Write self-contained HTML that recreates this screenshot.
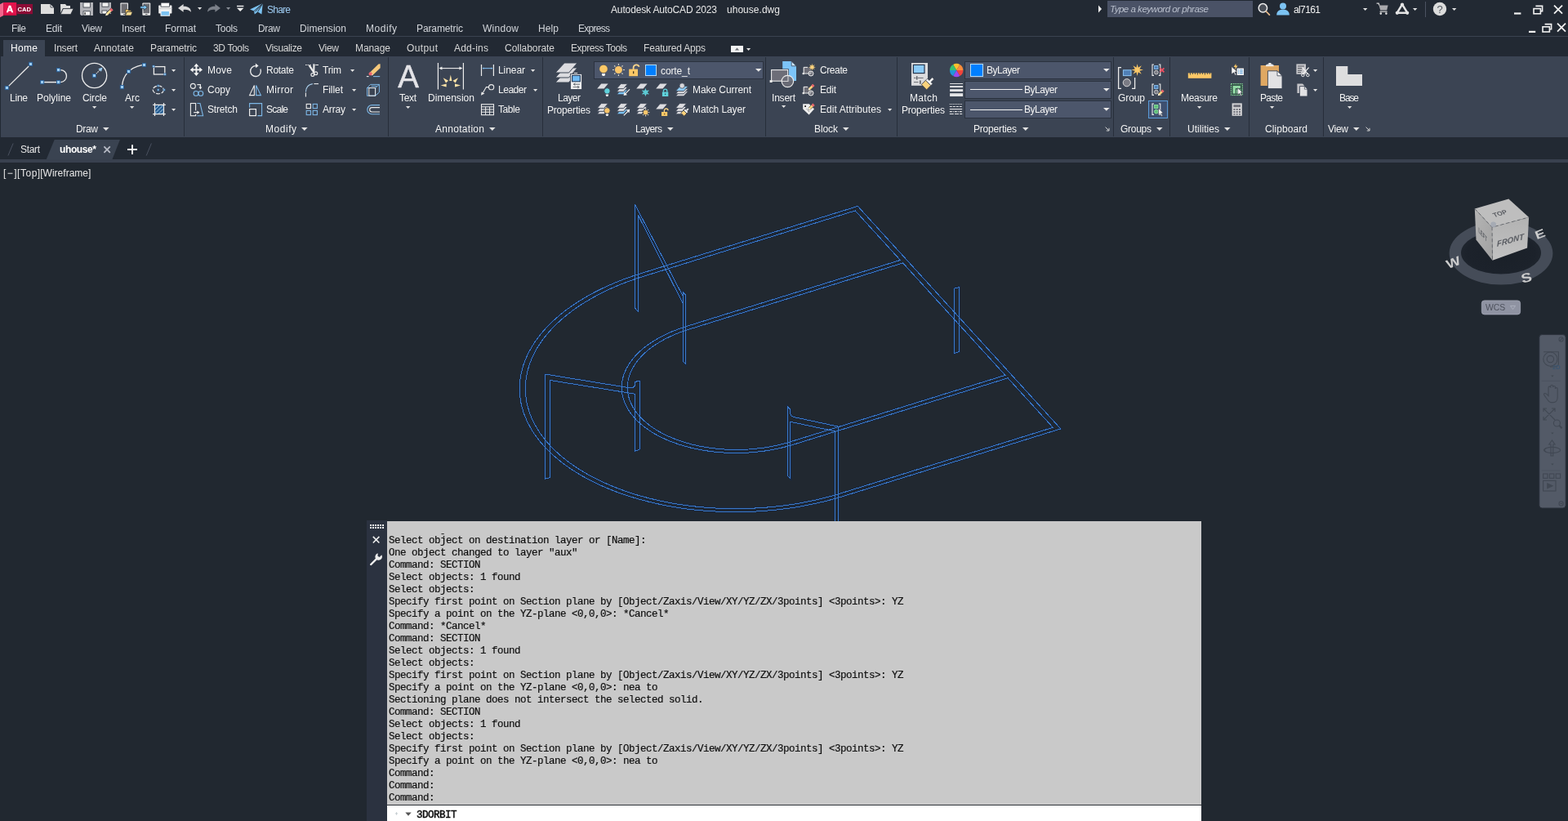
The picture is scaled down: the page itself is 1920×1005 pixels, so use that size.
<!DOCTYPE html>
<html lang="en">
<head>
<meta charset="utf-8">
<title>Autodesk AutoCAD 2023 - uhouse.dwg</title>
<style>
html,body{margin:0;padding:0;background:#212830;}
body{width:1920px;height:1005px;overflow:hidden;font-family:"Liberation Sans",sans-serif;}
#app{will-change:transform;position:relative;width:1920px;height:1005px;overflow:hidden;background:#212830;}
.b{position:absolute;}
.t{position:absolute;white-space:pre;line-height:16px;font-family:"Liberation Sans",sans-serif;}
svg{position:absolute;overflow:visible;}
.cl{height:15px;line-height:15px;white-space:pre;font-family:"Liberation Mono",monospace;font-size:12.5px;letter-spacing:-0.5px;color:#101010;-webkit-text-stroke:0.2px #101010;}
.cin{font-family:"Liberation Mono",monospace;font-size:12.5px;letter-spacing:-0.5px;color:#0a0a0a;-webkit-text-stroke:0.45px #0a0a0a;}

</style>
</head>
<body>
<div id="app">
<div class="b" style="left:0;top:0;width:1920px;height:69px;background:#222933"></div>
<div class="b" style="left:0;top:44px;width:1920px;height:1px;background:#3a4250"></div>
<div class="b" style="left:4px;top:49px;width:51px;height:20px;background:#3b4453"></div>
<div class="b" style="left:0;top:69px;width:1920px;height:99px;background:#3b4453"></div>
<div class="b" style="left:0;top:69px;width:1px;height:99px;background:#222933"></div>
<div class="b" style="left:0;top:168px;width:1920px;height:27px;background:#222933"></div>
<div class="b" style="left:0;top:195px;width:1920px;height:4px;background:#39414f"></div>
<div class="b" style="left:1356px;top:1px;width:178px;height:20px;background:#4a5266"></div>

<svg id="dwg" width="1920" height="1005" viewBox="0 0 1920 1005" style="left:0;top:0" fill="none" stroke-linejoin="miter">
<path d="M1050.3 252.4 L1298.8 524.9 L1032.6 607.4 L1024.6 609.8 L1016.5 612.0 L1008.3 614.1 L999.9 616.0 L991.5 617.8 L983.0 619.4 L974.4 620.9 L965.7 622.2 L957.0 623.3 L948.2 624.3 L939.4 625.1 L930.5 625.8 L921.6 626.2 L912.7 626.5 L903.8 626.7 L894.9 626.7 L886.0 626.5 L877.2 626.1 L868.3 625.6 L859.5 624.9 L850.8 624.1 L842.1 623.1 L833.5 621.9 L825.0 620.6 L816.6 619.1 L808.3 617.4 L800.0 615.6 L791.9 613.6 L783.9 611.5 L776.1 609.2 L768.4 606.8 L760.8 604.3 L753.4 601.6 L746.2 598.7 L739.1 595.7 L732.2 592.6 L725.5 589.4 L719.0 586.0 L712.7 582.5 L706.7 578.9 L700.8 575.2 L695.1 571.3 L689.7 567.4 L684.5 563.3 L679.6 559.2 L674.9 554.9 L670.5 550.6 L666.3 546.2 L662.3 541.7 L658.6 537.1 L655.2 532.5 L652.1 527.8 L649.3 523.0 L646.7 518.2 L644.4 513.3 L642.3 508.4 L640.6 503.4 L639.2 498.4 L638.0 493.4 L637.1 488.3 L636.6 483.3 L636.3 478.2 L636.3 473.1 L636.6 468.0 L637.2 462.9 L638.0 457.9 L639.2 452.8 L640.6 447.7 L642.4 442.7 L644.4 437.7 L646.7 432.8 L649.3 427.9 L652.2 423.0 L655.3 418.2 L658.7 413.4 L662.4 408.7 L666.3 404.1 L670.5 399.6 L675.0 395.1 L679.7 390.7 L684.6 386.4 L689.8 382.1 L695.3 378.0 L700.9 374.0 L706.8 370.1 L712.9 366.3 L719.2 362.6 L725.7 359.0 L732.4 355.5 L739.3 352.2 L746.3 349.0 L753.6 345.9 L761.0 342.9 L768.5 340.1 L776.2 337.4 L784.1 334.9 L1050.3 252.4Z M1047.2 257.9 L1102.4 318.4 L839.6 399.8 L835.5 401.2 L831.4 402.6 L827.4 404.1 L823.4 405.6 L819.6 407.3 L815.9 409.0 L812.2 410.8 L808.7 412.6 L805.2 414.5 L801.9 416.5 L798.7 418.5 L795.5 420.6 L792.5 422.7 L789.7 424.9 L786.9 427.1 L784.3 429.4 L781.8 431.7 L779.4 434.1 L777.2 436.5 L775.1 439.0 L773.2 441.5 L771.4 444.0 L769.7 446.5 L768.2 449.1 L766.8 451.7 L765.6 454.3 L764.5 457.0 L763.6 459.6 L762.8 462.3 L762.2 465.0 L761.7 467.7 L761.4 470.4 L761.3 473.1 L761.3 475.8 L761.4 478.5 L761.7 481.2 L762.2 483.8 L762.8 486.5 L763.6 489.1 L764.5 491.8 L765.6 494.4 L766.8 497.0 L768.2 499.5 L769.7 502.0 L771.3 504.5 L773.1 507.0 L775.1 509.4 L777.2 511.8 L779.4 514.2 L781.8 516.5 L784.2 518.7 L786.9 520.9 L789.6 523.0 L792.5 525.1 L795.5 527.2 L798.6 529.2 L801.8 531.1 L805.1 532.9 L808.6 534.7 L812.1 536.4 L815.8 538.1 L819.5 539.7 L823.4 541.2 L827.3 542.6 L831.3 544.0 L835.4 545.2 L839.5 546.4 L843.8 547.6 L848.1 548.6 L852.4 549.6 L856.8 550.4 L861.3 551.2 L865.8 551.9 L870.4 552.6 L875.0 553.1 L879.6 553.5 L884.3 553.9 L888.9 554.2 L893.6 554.4 L898.4 554.5 L903.1 554.5 L907.8 554.4 L912.5 554.2 L917.2 554.0 L921.9 553.6 L926.6 553.2 L931.3 552.7 L935.9 552.1 L940.5 551.4 L945.0 550.6 L949.6 549.8 L954.0 548.8 L958.4 547.8 L962.8 546.7 L967.1 545.5 L971.3 544.3 L1234.1 462.8 L1289.3 523.3 L1029.4 603.9 L1021.6 606.2 L1013.7 608.4 L1005.7 610.4 L997.6 612.3 L989.3 614.0 L981.0 615.6 L972.7 617.0 L964.2 618.3 L955.7 619.4 L947.1 620.3 L938.5 621.1 L929.9 621.7 L921.3 622.2 L912.6 622.5 L903.9 622.6 L895.3 622.6 L886.6 622.4 L878.0 622.1 L869.4 621.6 L860.8 620.9 L852.3 620.1 L843.9 619.1 L835.5 618.0 L827.2 616.7 L819.0 615.2 L810.9 613.6 L802.8 611.8 L794.9 609.9 L787.2 607.9 L779.5 605.7 L772.0 603.3 L764.7 600.8 L757.4 598.2 L750.4 595.4 L743.5 592.5 L736.8 589.5 L730.3 586.3 L724.0 583.0 L717.8 579.6 L711.9 576.1 L706.2 572.5 L700.7 568.7 L695.4 564.9 L690.4 560.9 L685.5 556.9 L681.0 552.8 L676.6 548.5 L672.6 544.2 L668.7 539.9 L665.1 535.4 L661.8 530.9 L658.8 526.3 L656.0 521.6 L653.5 516.9 L651.2 512.2 L649.3 507.4 L647.6 502.6 L646.2 497.7 L645.0 492.8 L644.2 487.9 L643.6 483.0 L643.3 478.0 L643.3 473.1 L643.6 468.1 L644.2 463.1 L645.1 458.2 L646.2 453.3 L647.6 448.4 L649.3 443.5 L651.3 438.6 L653.5 433.8 L656.0 429.0 L658.8 424.3 L661.9 419.6 L665.2 414.9 L668.8 410.4 L672.6 405.9 L676.7 401.4 L681.1 397.1 L685.6 392.8 L690.5 388.6 L695.5 384.5 L700.8 380.4 L706.3 376.5 L712.0 372.7 L718.0 369.0 L724.1 365.4 L730.4 361.9 L736.9 358.5 L743.6 355.3 L750.5 352.1 L757.6 349.1 L764.8 346.3 L772.2 343.5 L779.7 340.9 L787.3 338.5 L1047.2 257.9Z M1105.6 321.9 L1230.9 459.3 L968.1 540.7 L964.1 541.9 L960.0 543.0 L955.8 544.1 L951.6 545.1 L947.4 546.0 L943.1 546.8 L938.8 547.5 L934.4 548.2 L930.0 548.7 L925.6 549.2 L921.1 549.6 L916.6 550.0 L912.2 550.2 L907.7 550.4 L903.2 550.4 L898.7 550.4 L894.2 550.3 L889.8 550.2 L885.3 549.9 L880.9 549.5 L876.5 549.1 L872.1 548.6 L867.8 548.0 L863.5 547.3 L859.2 546.6 L855.0 545.8 L850.9 544.8 L846.8 543.9 L842.8 542.8 L838.8 541.6 L834.9 540.4 L831.1 539.1 L827.4 537.8 L823.7 536.3 L820.2 534.8 L816.7 533.3 L813.3 531.6 L810.1 529.9 L806.9 528.2 L803.8 526.3 L800.9 524.5 L798.0 522.5 L795.3 520.5 L792.7 518.5 L790.2 516.4 L787.8 514.3 L785.6 512.1 L783.5 509.9 L781.5 507.6 L779.6 505.3 L777.9 503.0 L776.3 500.6 L774.9 498.2 L773.6 495.7 L772.4 493.3 L771.4 490.8 L770.5 488.3 L769.8 485.8 L769.2 483.3 L768.8 480.7 L768.5 478.2 L768.4 475.6 L768.4 473.0 L768.5 470.5 L768.8 467.9 L769.2 465.3 L769.8 462.8 L770.6 460.2 L771.4 457.7 L772.5 455.2 L773.6 452.7 L774.9 450.2 L776.4 447.8 L777.9 445.4 L779.7 443.0 L781.5 440.6 L783.5 438.3 L785.6 436.0 L787.9 433.7 L790.2 431.5 L792.7 429.3 L795.3 427.2 L798.1 425.1 L800.9 423.1 L803.9 421.1 L807.0 419.2 L810.1 417.3 L813.4 415.5 L816.8 413.8 L820.3 412.1 L823.8 410.5 L827.5 408.9 L831.2 407.4 L835.0 406.0 L838.9 404.7 L842.9 403.4 L1105.6 321.9Z M781.5 381.7 L777.5 376.9 L777.5 250.4 L836.5 363.0 M781.5 381.7 L781.5 263.5 L836.5 372.1 M836.5 363.0 L836.5 357.4 L839.6 361.4 L839.6 445.8 L836.5 442.6 L836.5 363.0 M1168.4 353.1 L1174.7 351.5 L1174.7 430.6 L1168.4 432.5Z M673.6 584.6 L667.2 586.2 L667.2 458.3 L672.3 458.8 L771.0 474.8 L775.5 474.2 L777.4 472.0 L777.4 467.4 L783.4 466.3 L783.4 549.9 L777.4 552.3 L777.4 482.2 L673.6 465.5 L673.6 584.6 M964.4 582.7 L964.4 498.0 L967.9 501.5 L967.9 506.5 L969.2 509.0 L972.5 510.6 L1026.5 522.2 L1026.5 640.0 M964.4 582.7 L967.9 585.9 L967.9 516.3 L1022.0 527.8 L1022.0 640.0" stroke="#06296e" stroke-opacity="0.33" stroke-width="2.6"/>
<path d="M1050.3 252.4 L1298.8 524.9 L1032.6 607.4 L1024.6 609.8 L1016.5 612.0 L1008.3 614.1 L999.9 616.0 L991.5 617.8 L983.0 619.4 L974.4 620.9 L965.7 622.2 L957.0 623.3 L948.2 624.3 L939.4 625.1 L930.5 625.8 L921.6 626.2 L912.7 626.5 L903.8 626.7 L894.9 626.7 L886.0 626.5 L877.2 626.1 L868.3 625.6 L859.5 624.9 L850.8 624.1 L842.1 623.1 L833.5 621.9 L825.0 620.6 L816.6 619.1 L808.3 617.4 L800.0 615.6 L791.9 613.6 L783.9 611.5 L776.1 609.2 L768.4 606.8 L760.8 604.3 L753.4 601.6 L746.2 598.7 L739.1 595.7 L732.2 592.6 L725.5 589.4 L719.0 586.0 L712.7 582.5 L706.7 578.9 L700.8 575.2 L695.1 571.3 L689.7 567.4 L684.5 563.3 L679.6 559.2 L674.9 554.9 L670.5 550.6 L666.3 546.2 L662.3 541.7 L658.6 537.1 L655.2 532.5 L652.1 527.8 L649.3 523.0 L646.7 518.2 L644.4 513.3 L642.3 508.4 L640.6 503.4 L639.2 498.4 L638.0 493.4 L637.1 488.3 L636.6 483.3 L636.3 478.2 L636.3 473.1 L636.6 468.0 L637.2 462.9 L638.0 457.9 L639.2 452.8 L640.6 447.7 L642.4 442.7 L644.4 437.7 L646.7 432.8 L649.3 427.9 L652.2 423.0 L655.3 418.2 L658.7 413.4 L662.4 408.7 L666.3 404.1 L670.5 399.6 L675.0 395.1 L679.7 390.7 L684.6 386.4 L689.8 382.1 L695.3 378.0 L700.9 374.0 L706.8 370.1 L712.9 366.3 L719.2 362.6 L725.7 359.0 L732.4 355.5 L739.3 352.2 L746.3 349.0 L753.6 345.9 L761.0 342.9 L768.5 340.1 L776.2 337.4 L784.1 334.9 L1050.3 252.4Z M1047.2 257.9 L1102.4 318.4 L839.6 399.8 L835.5 401.2 L831.4 402.6 L827.4 404.1 L823.4 405.6 L819.6 407.3 L815.9 409.0 L812.2 410.8 L808.7 412.6 L805.2 414.5 L801.9 416.5 L798.7 418.5 L795.5 420.6 L792.5 422.7 L789.7 424.9 L786.9 427.1 L784.3 429.4 L781.8 431.7 L779.4 434.1 L777.2 436.5 L775.1 439.0 L773.2 441.5 L771.4 444.0 L769.7 446.5 L768.2 449.1 L766.8 451.7 L765.6 454.3 L764.5 457.0 L763.6 459.6 L762.8 462.3 L762.2 465.0 L761.7 467.7 L761.4 470.4 L761.3 473.1 L761.3 475.8 L761.4 478.5 L761.7 481.2 L762.2 483.8 L762.8 486.5 L763.6 489.1 L764.5 491.8 L765.6 494.4 L766.8 497.0 L768.2 499.5 L769.7 502.0 L771.3 504.5 L773.1 507.0 L775.1 509.4 L777.2 511.8 L779.4 514.2 L781.8 516.5 L784.2 518.7 L786.9 520.9 L789.6 523.0 L792.5 525.1 L795.5 527.2 L798.6 529.2 L801.8 531.1 L805.1 532.9 L808.6 534.7 L812.1 536.4 L815.8 538.1 L819.5 539.7 L823.4 541.2 L827.3 542.6 L831.3 544.0 L835.4 545.2 L839.5 546.4 L843.8 547.6 L848.1 548.6 L852.4 549.6 L856.8 550.4 L861.3 551.2 L865.8 551.9 L870.4 552.6 L875.0 553.1 L879.6 553.5 L884.3 553.9 L888.9 554.2 L893.6 554.4 L898.4 554.5 L903.1 554.5 L907.8 554.4 L912.5 554.2 L917.2 554.0 L921.9 553.6 L926.6 553.2 L931.3 552.7 L935.9 552.1 L940.5 551.4 L945.0 550.6 L949.6 549.8 L954.0 548.8 L958.4 547.8 L962.8 546.7 L967.1 545.5 L971.3 544.3 L1234.1 462.8 L1289.3 523.3 L1029.4 603.9 L1021.6 606.2 L1013.7 608.4 L1005.7 610.4 L997.6 612.3 L989.3 614.0 L981.0 615.6 L972.7 617.0 L964.2 618.3 L955.7 619.4 L947.1 620.3 L938.5 621.1 L929.9 621.7 L921.3 622.2 L912.6 622.5 L903.9 622.6 L895.3 622.6 L886.6 622.4 L878.0 622.1 L869.4 621.6 L860.8 620.9 L852.3 620.1 L843.9 619.1 L835.5 618.0 L827.2 616.7 L819.0 615.2 L810.9 613.6 L802.8 611.8 L794.9 609.9 L787.2 607.9 L779.5 605.7 L772.0 603.3 L764.7 600.8 L757.4 598.2 L750.4 595.4 L743.5 592.5 L736.8 589.5 L730.3 586.3 L724.0 583.0 L717.8 579.6 L711.9 576.1 L706.2 572.5 L700.7 568.7 L695.4 564.9 L690.4 560.9 L685.5 556.9 L681.0 552.8 L676.6 548.5 L672.6 544.2 L668.7 539.9 L665.1 535.4 L661.8 530.9 L658.8 526.3 L656.0 521.6 L653.5 516.9 L651.2 512.2 L649.3 507.4 L647.6 502.6 L646.2 497.7 L645.0 492.8 L644.2 487.9 L643.6 483.0 L643.3 478.0 L643.3 473.1 L643.6 468.1 L644.2 463.1 L645.1 458.2 L646.2 453.3 L647.6 448.4 L649.3 443.5 L651.3 438.6 L653.5 433.8 L656.0 429.0 L658.8 424.3 L661.9 419.6 L665.2 414.9 L668.8 410.4 L672.6 405.9 L676.7 401.4 L681.1 397.1 L685.6 392.8 L690.5 388.6 L695.5 384.5 L700.8 380.4 L706.3 376.5 L712.0 372.7 L718.0 369.0 L724.1 365.4 L730.4 361.9 L736.9 358.5 L743.6 355.3 L750.5 352.1 L757.6 349.1 L764.8 346.3 L772.2 343.5 L779.7 340.9 L787.3 338.5 L1047.2 257.9Z M1105.6 321.9 L1230.9 459.3 L968.1 540.7 L964.1 541.9 L960.0 543.0 L955.8 544.1 L951.6 545.1 L947.4 546.0 L943.1 546.8 L938.8 547.5 L934.4 548.2 L930.0 548.7 L925.6 549.2 L921.1 549.6 L916.6 550.0 L912.2 550.2 L907.7 550.4 L903.2 550.4 L898.7 550.4 L894.2 550.3 L889.8 550.2 L885.3 549.9 L880.9 549.5 L876.5 549.1 L872.1 548.6 L867.8 548.0 L863.5 547.3 L859.2 546.6 L855.0 545.8 L850.9 544.8 L846.8 543.9 L842.8 542.8 L838.8 541.6 L834.9 540.4 L831.1 539.1 L827.4 537.8 L823.7 536.3 L820.2 534.8 L816.7 533.3 L813.3 531.6 L810.1 529.9 L806.9 528.2 L803.8 526.3 L800.9 524.5 L798.0 522.5 L795.3 520.5 L792.7 518.5 L790.2 516.4 L787.8 514.3 L785.6 512.1 L783.5 509.9 L781.5 507.6 L779.6 505.3 L777.9 503.0 L776.3 500.6 L774.9 498.2 L773.6 495.7 L772.4 493.3 L771.4 490.8 L770.5 488.3 L769.8 485.8 L769.2 483.3 L768.8 480.7 L768.5 478.2 L768.4 475.6 L768.4 473.0 L768.5 470.5 L768.8 467.9 L769.2 465.3 L769.8 462.8 L770.6 460.2 L771.4 457.7 L772.5 455.2 L773.6 452.7 L774.9 450.2 L776.4 447.8 L777.9 445.4 L779.7 443.0 L781.5 440.6 L783.5 438.3 L785.6 436.0 L787.9 433.7 L790.2 431.5 L792.7 429.3 L795.3 427.2 L798.1 425.1 L800.9 423.1 L803.9 421.1 L807.0 419.2 L810.1 417.3 L813.4 415.5 L816.8 413.8 L820.3 412.1 L823.8 410.5 L827.5 408.9 L831.2 407.4 L835.0 406.0 L838.9 404.7 L842.9 403.4 L1105.6 321.9Z M781.5 381.7 L777.5 376.9 L777.5 250.4 L836.5 363.0 M781.5 381.7 L781.5 263.5 L836.5 372.1 M836.5 363.0 L836.5 357.4 L839.6 361.4 L839.6 445.8 L836.5 442.6 L836.5 363.0 M1168.4 353.1 L1174.7 351.5 L1174.7 430.6 L1168.4 432.5Z M673.6 584.6 L667.2 586.2 L667.2 458.3 L672.3 458.8 L771.0 474.8 L775.5 474.2 L777.4 472.0 L777.4 467.4 L783.4 466.3 L783.4 549.9 L777.4 552.3 L777.4 482.2 L673.6 465.5 L673.6 584.6 M964.4 582.7 L964.4 498.0 L967.9 501.5 L967.9 506.5 L969.2 509.0 L972.5 510.6 L1026.5 522.2 L1026.5 640.0 M964.4 582.7 L967.9 585.9 L967.9 516.3 L1022.0 527.8 L1022.0 640.0" stroke="#3b79c8" stroke-width="1" shape-rendering="crispEdges"/>
</svg>
<svg width="170" height="170" viewBox="1750 230 170 170" style="left:1750px;top:230px">
<defs>
<radialGradient id="cshadow" cx="0.5" cy="0.5" r="0.5"><stop offset="0" stop-color="#1a2028"/><stop offset="0.75" stop-color="#1c222b"/><stop offset="1" stop-color="#212830"/></radialGradient>
<linearGradient id="cfront" x1="0" y1="0" x2="0" y2="1"><stop offset="0" stop-color="#b2b2b2"/><stop offset="1" stop-color="#c2c2c2"/></linearGradient>
<linearGradient id="cleft" x1="0" y1="0" x2="1" y2="1"><stop offset="0" stop-color="#b4b4b4"/><stop offset="1" stop-color="#a2a2a2"/></linearGradient>
</defs>
<ellipse cx="1838" cy="310" rx="56" ry="32" fill="url(#cshadow)"/>
<path fill-rule="evenodd" fill="#454c58" d="M1774.6 310a63.4 38.6 0 1 0 126.8 0a63.4 38.6 0 1 0 -126.8 0ZM1789 309.5a49 26 0 1 0 98 0a49 26 0 1 0 -98 0Z"/>
<path d="M1805.8 255.4L1847.3 243.5L1872.1 265.9L1827 278.2Z" fill="#bebebe"/>
<path d="M1827 278.2L1872.1 265.9L1870.1 303.6L1827.5 318.8Z" fill="url(#cfront)"/>
<path d="M1805.8 255.4L1827 278.2L1827.5 318.8L1807.5 293.4Z" fill="url(#cleft)"/>
<path d="M1805.8 255.4L1827 278.2L1872.1 265.9M1827 278.2L1827.5 318.8" fill="none" stroke="#5a5d63" stroke-width="0.8" stroke-dasharray="4 3"/>
<circle cx="1828.6" cy="275" r="3.4" fill="#9ea4b0" opacity="0.75"/>
<g fill="#585b61" style="font-family:'Liberation Sans',sans-serif;font-weight:bold" text-anchor="middle">
<text transform="matrix(0.95 -0.27 0.52 0.80 1838.2 263.6)" font-size="8.4">TOP</text>
<text transform="matrix(0.96 -0.27 0.03 1 1849.6 297.4)" font-size="10" style="font-style:italic">FRONT</text>
<text transform="matrix(0.50 0.62 0.02 1.15 1815.6 290.4)" font-size="8">LEFT</text>
</g>
<g fill="#cdcdcd" style="font-family:'Liberation Sans',sans-serif;font-weight:bold" font-size="16.5" text-anchor="middle">
<text transform="translate(1781.4 326.2) rotate(-21) scale(1.12 0.92)">W</text>
<text transform="translate(1870.4 345.2) rotate(-14) scale(1.2 0.95)">S</text>
<text transform="translate(1887.6 291) rotate(-21) scale(1.12 0.86)">E</text>
</g>
<rect x="1814.3" y="367.9" width="47.3" height="17" rx="3.4" fill="#8f93a2" stroke="#a3a7b6" stroke-width="0.8"/>
<text x="1819" y="380.2" font-family="Liberation Sans, sans-serif" font-size="10.4" fill="#4e525d">WCS</text>
<path d="M1849.4 374.4H1855.6L1852.5 378.6Z" fill="none" stroke="#adb1be" stroke-width="0.9"/>
</svg>
<svg width="40" height="220" viewBox="1880 405 40 220" style="left:1880px;top:405px">
<rect x="1884.8" y="409.6" width="32.4" height="212.4" rx="3.4" fill="#535a67" stroke="#2a303a" stroke-width="1"/>
<g fill="none" stroke="#414853" stroke-width="1.1">
<circle cx="1911.6" cy="415.4" r="2.6"/><path d="M1910 417L1913.2 413.8"/>
<circle cx="1911.6" cy="616.4" r="2.6"/><path d="M1910.2 616.4H1913"/>
<path d="M1890 430.8H1908.4V445A4 4 0 0 1 1904.4 449H1898"/><circle cx="1898.4" cy="439.6" r="8.6"/><circle cx="1898.4" cy="439.6" r="4.2"/>
<path d="M1887.6 466.4H1910.6M1887.6 576H1910.6" stroke="#4a515d" stroke-width="0.8"/>
<path d="M1894 488C1890.8 484 1889.6 482.4 1891.2 481.6C1893 480.8 1894.4 483 1896 484.6V474.6C1896 472.6 1898.8 472.6 1898.8 474.6V472.8C1898.8 470.8 1901.6 470.8 1901.6 472.8V474C1901.6 472 1904.4 472 1904.4 474V476C1904.4 474.2 1907.2 474.2 1907.2 476V486C1907.2 490 1905 492.6 1902 492.6H1899C1897 492.6 1895.6 490.4 1894 488Z"/>
<path d="M1890 500L1904 514M1904 500L1890 514M1890 504V500H1894M1900 500H1904V504M1890 510V514H1894"/>
<circle cx="1906.4" cy="518" r="4"/><path d="M1909.4 521L1912.6 524.2" stroke-width="2"/>
<path d="M1900.4 539L1896.8 544H1899V558H1901.8V544H1904Z"/><ellipse cx="1900.6" cy="551" rx="10" ry="3.6"/><path d="M1893 553L1890.6 551L1893 548.6"/>
<rect x="1889.6" y="580" width="5.4" height="5.4"/><rect x="1897.4" y="580" width="5.4" height="5.4"/><rect x="1905.2" y="580" width="5.4" height="5.4"/><rect x="1889.6" y="588.4" width="15.4" height="12.6"/>
</g>
<g fill="#414853"><path d="M1894.2 591L1902.4 594.8L1894.2 598.6Z"/><path d="M1899.2 459.4H1902.6L1900.9 461.6Z"/><path d="M1899.2 529.4H1902.6L1900.9 531.6Z"/><path d="M1899.2 567.4H1902.6L1900.9 569.6Z"/></g>
<text x="1901" y="452" font-family="Liberation Sans, sans-serif" font-weight="bold" font-size="7.5" fill="#3b5570">2D</text>
</svg>
<div class="b" style="left:449px;top:637px;width:25px;height:368px;background:#2b3240"></div>
<div class="b" style="left:474px;top:638px;width:997px;height:347px;background:#c9c9c9"></div>
<div class="b" style="left:474px;top:985px;width:997px;height:1px;background:#2e3238"></div>
<div class="b" style="left:474px;top:986px;width:997px;height:19px;background:#ffffff"></div>
<div id="hist" class="b" style="left:476px;top:655px;width:990px;">
<div class="cl">Select object on destination layer or [Name]:</div>
<div class="cl">One object changed to layer "aux"</div>
<div class="cl">Command: SECTION</div>
<div class="cl">Select objects: 1 found</div>
<div class="cl">Select objects:</div>
<div class="cl">Specify first point on Section plane by [Object/Zaxis/View/XY/YZ/ZX/3points] &lt;3points&gt;: YZ</div>
<div class="cl">Specify a point on the YZ-plane &lt;0,0,0&gt;: *Cancel*</div>
<div class="cl">Command: *Cancel*</div>
<div class="cl">Command: SECTION</div>
<div class="cl">Select objects: 1 found</div>
<div class="cl">Select objects:</div>
<div class="cl">Specify first point on Section plane by [Object/Zaxis/View/XY/YZ/ZX/3points] &lt;3points&gt;: YZ</div>
<div class="cl">Specify a point on the YZ-plane &lt;0,0,0&gt;: nea to</div>
<div class="cl">Sectioning plane does not intersect the selected solid.</div>
<div class="cl">Command: SECTION</div>
<div class="cl">Select objects: 1 found</div>
<div class="cl">Select objects:</div>
<div class="cl">Specify first point on Section plane by [Object/Zaxis/View/XY/YZ/ZX/3points] &lt;3points&gt;: YZ</div>
<div class="cl">Specify a point on the YZ-plane &lt;0,0,0&gt;: nea to</div>
<div class="cl">Command:</div>
<div class="cl">Command:</div>
<div class="cl">Command:</div>
</div>
<span class="t" style="left:538.5px;top:645.5px;font-family:'Liberation Mono',monospace;font-size:12px;color:#222;">-</span>
<span class="t cin" style="left:510px;top:990px;">3DORBIT</span>
<svg width="25" height="60" viewBox="0 0 25 60" style="left:449px;top:638px">
<g fill="#f4f4f4"><rect x="4" y="4" width="2" height="2"/><rect x="4" y="7" width="2" height="2"/><rect x="7" y="4" width="2" height="2"/><rect x="7" y="7" width="2" height="2"/><rect x="10" y="4" width="2" height="2"/><rect x="10" y="7" width="2" height="2"/><rect x="13" y="4" width="2" height="2"/><rect x="13" y="7" width="2" height="2"/><rect x="16" y="4" width="2" height="2"/><rect x="16" y="7" width="2" height="2"/><rect x="19" y="4" width="2" height="2"/><rect x="19" y="7" width="2" height="2"/></g>
<path d="M7.8 18.9 L15.4 26.5 M15.4 18.9 L7.8 26.5" stroke="#eeeeee" stroke-width="1.6" stroke-linecap="butt" fill="none"/>
<path d="M5.2 53 L12.8 45.4" stroke="#eeeeee" stroke-width="2.4" stroke-linecap="round" fill="none"/>
<path d="M18.3 41.2 a4.3 4.3 0 1 1 -4.6 -1.9 l-0.2 3.4 l2.2 1.2 z" fill="#eeeeee"/>
</svg>
<svg width="30" height="12" viewBox="0 0 30 12" style="left:480px;top:990px"><path d="M16.3 4.6 h7.4 l-3.7 4.2z" fill="#555555"/><path d="M5.5 4.2 v3.4 M3.8 5.9 h3.4" stroke="#c4cdd0" stroke-width="1" fill="none"/></svg>
<svg width="42" height="23" viewBox="0 0 42 23" style="left:0px;top:0px" >
<path d="M0 5.2 L4.2 3 V19 L0 21.2Z" fill="#f2668c"/>
<rect x="4.2" y="3" width="16" height="16" fill="#e2144c"/>
<path d="M4.2 17.5 H20.2 V19 H4.2Z" fill="#c40f40"/>
<rect x="20.2" y="5" width="19.8" height="12.2" fill="#8c0b36"/>
<text x="12.1" y="15" style="font-family:'Liberation Sans',sans-serif;font-weight:bold" font-size="11.8" fill="#fff" stroke="#fff" stroke-width="0.3" text-anchor="middle">A</text>
<text x="29.8" y="14" style="font-family:'Liberation Sans',sans-serif;font-weight:bold" font-size="7.6" fill="#fff" text-anchor="middle">CAD</text>
</svg>
<svg width="16" height="12" viewBox="0 0 16 12" style="left:50px;top:5px" ><path d="M0 0H12L16 4V12H0Z" fill="#dedede"/><path d="M12 0V4H16Z" fill="#f6f6f6" stroke="#222933" stroke-width="0.8"/></svg>
<svg width="17" height="13" viewBox="0 0 17 13" style="left:74px;top:5px" ><path d="M0 0H6L7.5 2H12V5H3L0.3 11Z" fill="#dedede"/><path d="M3.4 5.6H16L12.6 12.6H0.2Z" fill="#dedede" stroke="#222933" stroke-width="0.7"/></svg>
<svg width="16" height="16" viewBox="0 0 16 16" style="left:98px;top:3px" ><path d="M0 0H16V16H1.6L0 14.4Z" fill="#b2b3b8"/><rect x="4" y="0" width="8.6" height="6" fill="#f0f0f0" stroke="#222933" stroke-width="0.7"/><rect x="4" y="10.8" width="8.6" height="5.2" fill="#f4f4f4" stroke="#222933" stroke-width="0.7"/><rect x="5.4" y="12.2" width="1.4" height="2.6" fill="#333"/></svg>
<svg width="17" height="17" viewBox="0 0 17 17" style="left:122px;top:3px" >
<path d="M0 0H14V14H1.4L0 12.6Z" fill="#b2b3b8"/>
<rect x="3" y="0" width="8" height="5.2" fill="#f0f0f0" stroke="#222933" stroke-width="0.7"/>
<rect x="3" y="10" width="6" height="4" fill="#f4f4f4" stroke="#222933" stroke-width="0.7"/>
<g transform="translate(7.2,16.2) rotate(-45)"><path d="M0 0L3 -1.7H11.5V1.7H3Z" fill="#fbdc92" stroke="#222933" stroke-width="0.8"/><path d="M0 0L3 -1.7V1.7Z" fill="#fff4d6"/><rect x="8.6" y="-1.7" width="3" height="3.4" fill="#e8636d"/></g>
</svg>
<svg width="16" height="17" viewBox="0 0 16 17" style="left:147px;top:3px" >
<rect x="0.4" y="0.4" width="9.6" height="15.4" rx="0.8" fill="#ededed"/>
<rect x="1.5" y="1.6" width="7.4" height="11.6" fill="#6c6d73"/>
<rect x="4" y="14" width="2.4" height="0.9" fill="#555"/>
<path d="M6.6 8.6H9.6L10.4 9.8H13.4V11.4H8.4L6.6 15.6Z" fill="#f7c966" stroke="#222933" stroke-width="0.6"/>
<path d="M8.6 11.4H15.2L13.4 15.9H6.6Z" fill="#fbdc92" stroke="#222933" stroke-width="0.6"/>
</svg>
<svg width="14" height="17" viewBox="0 0 14 17" style="left:171px;top:3px" >
<rect x="3.4" y="0.4" width="9.8" height="15.4" rx="0.8" fill="#ededed"/>
<rect x="4.5" y="1.6" width="7.6" height="11.6" fill="#6c6d73"/>
<rect x="7.1" y="14" width="2.4" height="0.9" fill="#555"/>
<path d="M0.8 4.7H5.2V2.6L9.4 6L5.2 9.4V7.3H0.8Z" fill="#7cc3f3" stroke="#222933" stroke-width="0.7"/>
</svg>
<svg width="17" height="17" viewBox="0 0 17 17" style="left:194px;top:3px" >
<rect x="0.2" y="3.4" width="16.2" height="10" rx="0.6" fill="#efefef"/>
<rect x="3" y="0.2" width="10.6" height="5" fill="#fafafa" stroke="#222933" stroke-width="0.7"/>
<rect x="0.2" y="7" width="16.2" height="1" fill="#cfcfcf"/>
<rect x="3" y="10.4" width="10.6" height="5.8" fill="#7cc3f3" stroke="#fafafa" stroke-width="1"/>
</svg>
<svg width="17" height="11" viewBox="0 0 17 11" style="left:218px;top:5px" ><path d="M0 4.9L6.6 0V2.8C12 2.6 15.6 4.6 16 9.8C13.6 7 10.4 6.4 6.6 6.9V9.8Z" fill="#dadada"/></svg>
<svg width="5.2" height="2.9" viewBox="0 0 5.2 2.9" style="left:241.5px;top:9.3px"><path d="M0 0H5.2L2.6 2.9Z" fill="#e2e2e2"/></svg>
<svg width="17" height="11" viewBox="0 0 17 11" style="left:254px;top:5px" ><path d="M16 4.9L9.4 0V2.8C4 2.6 0.4 4.6 0 9.8C2.4 7 5.6 6.4 9.4 6.9V9.8Z" fill="#7b8089"/></svg>
<svg width="5.2" height="2.9" viewBox="0 0 5.2 2.9" style="left:277.3px;top:9.3px"><path d="M0 0H5.2L2.6 2.9Z" fill="#8a8f97"/></svg>
<svg width="9" height="9" viewBox="0 0 9 9" style="left:290px;top:6px" ><rect x="0" y="0.8" width="8.4" height="1.4" fill="#f0f0f0"/><path d="M0 3.8H8.4L4.2 8Z" fill="#f0f0f0"/></svg>
<svg width="18" height="16" viewBox="0 0 18 16" style="left:305px;top:3px" >
<path d="M1 8.6L16.8 1L15.4 14.6L10.6 11.4L6.8 14.4L6 10.6Z" fill="#7cc3f3"/>
<path d="M6 10.6L16.8 1L7.6 11.4M10.6 11.4L16.8 1" stroke="#222933" stroke-width="0.9" fill="none"/>
</svg>
<svg width="6" height="10" viewBox="0 0 6 10" style="left:1344px;top:6px" ><path d="M1 0.6L5 5L1 9.4Z" fill="#f0f0f0"/></svg>
<svg width="18" height="18" viewBox="0 0 18 18" style="left:1539px;top:2px" ><circle cx="7.4" cy="7.8" r="5.2" fill="#4a4f58" stroke="#efefef" stroke-width="1.5"/><path d="M11.4 12L15.4 16.2" stroke="#e6b98a" stroke-width="1.8" stroke-linecap="round"/></svg>
<svg width="18" height="18" viewBox="0 0 18 18" style="left:1562px;top:2px" ><circle cx="9" cy="5.6" r="4" fill="#7cc3f3"/><path d="M1.2 16.4C1.2 11.6 4.6 9.8 9 9.8C13.4 9.8 16.8 11.6 16.8 16.4Z" fill="#7cc3f3"/></svg>
<svg width="5.4" height="2.9" viewBox="0 0 5.4 2.9" style="left:1668.6px;top:9.6px"><path d="M0 0H5.4L2.7 2.9Z" fill="#e2e2e2"/></svg>
<svg width="16" height="16" viewBox="0 0 16 16" style="left:1685px;top:3px" >
<path d="M0.6 1.2H3.2L4 3.6" stroke="#d8d8d8" stroke-width="1.2" fill="none"/>
<path d="M3.6 3.4H14.6L13.2 9.6H5.2Z" fill="#a8a8ac"/>
<path d="M4.6 11.2H13.6" stroke="#d8d8d8" stroke-width="1.2"/>
<circle cx="5.8" cy="13.6" r="1.3" fill="#e0e0e0"/><circle cx="12.4" cy="13.6" r="1.3" fill="#e0e0e0"/>
</svg>
<svg width="18" height="16" viewBox="0 0 18 16" style="left:1708px;top:3px" >
<path d="M9 2.4L2.6 12.8H15.4Z" fill="none" stroke="#e4e4e4" stroke-width="2.5" stroke-linejoin="round"/>
<circle cx="9" cy="2.6" r="2.1" fill="#e4e4e4"/><circle cx="2.8" cy="12.8" r="2.1" fill="#e4e4e4"/><circle cx="15.2" cy="12.8" r="2.1" fill="#e4e4e4"/>
</svg>
<svg width="5.4" height="2.9" viewBox="0 0 5.4 2.9" style="left:1730.2px;top:9.6px"><path d="M0 0H5.4L2.7 2.9Z" fill="#e2e2e2"/></svg>
<svg width="1" height="19" viewBox="0 0 1 19" style="left:1745px;top:2px" ><rect width="1" height="19" fill="#4b5261"/></svg>
<svg width="18" height="18" viewBox="0 0 18 18" style="left:1754px;top:2px" ><circle cx="9" cy="9" r="8.2" fill="#dcdcdc"/><text x="9" y="13.6" font-family="Liberation Sans, sans-serif" font-size="13" fill="#555a62" text-anchor="middle">?</text></svg>
<svg width="5.4" height="2.9" viewBox="0 0 5.4 2.9" style="left:1778.2px;top:9.6px"><path d="M0 0H5.4L2.7 2.9Z" fill="#e2e2e2"/></svg>
<svg width="64" height="16" viewBox="0 0 64 16" style="left:1852px;top:4px" >
<rect x="2" y="11.4" width="8.4" height="2.2" fill="#f2f2f2"/>
<path d="M28.4 3.4H36.6V9.6H34.4" fill="none" stroke="#f2f2f2" stroke-width="1.6"/>
<rect x="26" y="6.6" width="8.4" height="6.2" fill="none" stroke="#f2f2f2" stroke-width="1.6"/>
<path d="M51 2.6L61 12.6M61 2.6L51 12.6" stroke="#f2f2f2" stroke-width="1.8"/>
</svg>
<svg width="50" height="16" viewBox="0 0 50 16" style="left:1870px;top:26px" >
<rect x="2" y="11.8" width="8.2" height="2.2" fill="#f2f2f2"/>
<path d="M21.6 3.6H29.6V9.8H27.4" fill="none" stroke="#f2f2f2" stroke-width="1.6"/>
<rect x="19" y="6.8" width="8.4" height="6.2" fill="none" stroke="#f2f2f2" stroke-width="1.6"/>
<path d="M37 2.6L47 12.6M47 2.6L37 12.6" stroke="#f2f2f2" stroke-width="1.8"/>
</svg>
<svg width="26" height="8" viewBox="0 0 26 8" style="left:894px;top:56px" ><rect x="1" y="0" width="15" height="8" fill="#f4f4f4"/><path d="M5.9 5.6L8.5 2.6L11.1 5.6Z" fill="#6e7076"/></svg>
<svg width="5.2" height="2.9" viewBox="0 0 5.2 2.9" style="left:914px;top:58.8px"><path d="M0 0H5.2L2.6 2.9Z" fill="#e2e2e2"/></svg>
<svg width="1" height="97" viewBox="0 0 1 97" style="left:225px;top:70px" ><rect width="1" height="97" fill="#272e3a"/></svg>
<svg width="1" height="97" viewBox="0 0 1 97" style="left:475px;top:70px" ><rect width="1" height="97" fill="#272e3a"/></svg>
<svg width="1" height="97" viewBox="0 0 1 97" style="left:664px;top:70px" ><rect width="1" height="97" fill="#272e3a"/></svg>
<svg width="1" height="97" viewBox="0 0 1 97" style="left:937px;top:70px" ><rect width="1" height="97" fill="#272e3a"/></svg>
<svg width="1" height="97" viewBox="0 0 1 97" style="left:1098px;top:70px" ><rect width="1" height="97" fill="#272e3a"/></svg>
<svg width="1" height="97" viewBox="0 0 1 97" style="left:1363px;top:70px" ><rect width="1" height="97" fill="#272e3a"/></svg>
<svg width="1" height="97" viewBox="0 0 1 97" style="left:1432px;top:70px" ><rect width="1" height="97" fill="#272e3a"/></svg>
<svg width="1" height="97" viewBox="0 0 1 97" style="left:1529px;top:70px" ><rect width="1" height="97" fill="#272e3a"/></svg>
<svg width="1" height="97" viewBox="0 0 1 97" style="left:1620px;top:70px" ><rect width="1" height="97" fill="#272e3a"/></svg>
<svg width="44" height="44" viewBox="0 0 44 44" style="left:0px;top:70px" ><path d="M10.6 35.4L35.2 11" stroke="#ececec" stroke-width="1.3"/><rect x="6.3" y="35.4" width="4.2" height="4.2" fill="#9ccdf2" stroke="#2b5f96" stroke-width="1"/><rect x="35.4" y="6.3" width="4.2" height="4.2" fill="#9ccdf2" stroke="#2b5f96" stroke-width="1"/></svg>
<svg width="44" height="44" viewBox="0 0 44 44" style="left:44px;top:70px" ><path d="M10 30.6H25.4" stroke="#ececec" stroke-width="1.5"/><path d="M30 15.6A7.5 7.5 0 0 1 30 30.6" stroke="#ececec" stroke-width="1.3" fill="none"/><rect x="5.5" y="28.5" width="4.2" height="4.2" fill="#9ccdf2" stroke="#2b5f96" stroke-width="1"/><rect x="25.5" y="28.5" width="4.2" height="4.2" fill="#9ccdf2" stroke="#2b5f96" stroke-width="1"/><rect x="25.5" y="13.5" width="4.2" height="4.2" fill="#9ccdf2" stroke="#2b5f96" stroke-width="1"/></svg>
<svg width="40" height="44" viewBox="0 0 40 44" style="left:96px;top:70px" ><circle cx="19.6" cy="22.5" r="15.1" fill="none" stroke="#ececec" stroke-width="1.3"/><path d="M21.6 20.4L26.4 15.6" stroke="#ececec" stroke-width="1.1" stroke-dasharray="1.6 1"/><path d="M29.6 12.6L24.4 14.2L28 17.8Z" fill="#9ccdf2"/><rect x="17.3" y="20.5" width="4.2" height="4.2" fill="#9ccdf2" stroke="#2b5f96" stroke-width="1"/></svg>
<svg width="40" height="44" viewBox="0 0 40 44" style="left:144px;top:70px" ><path d="M5.6 34.4C6.6 24 13 13 30 9.6" fill="none" stroke="#ececec" stroke-width="1.3"/><rect x="3.3" y="34.5" width="4.2" height="4.2" fill="#9ccdf2" stroke="#2b5f96" stroke-width="1"/><rect x="11.5" y="15.4" width="4.2" height="4.2" fill="#9ccdf2" stroke="#2b5f96" stroke-width="1"/><rect x="30.4" y="7.4" width="4.2" height="4.2" fill="#9ccdf2" stroke="#2b5f96" stroke-width="1"/></svg>
<svg width="5.3" height="2.9" viewBox="0 0 5.3 2.9" style="left:113px;top:130.2px"><path d="M0 0H5.3L2.65 2.9Z" fill="#e2e2e2"/></svg>
<svg width="5.3" height="2.9" viewBox="0 0 5.3 2.9" style="left:158.8px;top:130.2px"><path d="M0 0H5.3L2.65 2.9Z" fill="#e2e2e2"/></svg>
<svg width="18" height="14" viewBox="0 0 18 14" style="left:186px;top:79px" ><rect x="2.4" y="2.6" width="13.4" height="9.4" fill="none" stroke="#ececec" stroke-width="1.3"/><rect x="0.8" y="1" width="2.4" height="2.4" fill="#9ccdf2" stroke="#2b5f96" stroke-width="0.6"/><rect x="14.8" y="10.8" width="2.4" height="2.4" fill="#9ccdf2" stroke="#2b5f96" stroke-width="0.6"/></svg>
<svg width="5.2" height="2.9" viewBox="0 0 5.2 2.9" style="left:210px;top:85.3px"><path d="M0 0H5.2L2.6 2.9Z" fill="#e2e2e2"/></svg>
<svg width="18" height="14" viewBox="0 0 18 14" style="left:186px;top:103px" ><ellipse cx="7.8" cy="7" rx="6.6" ry="4.8" fill="none" stroke="#ececec" stroke-width="1.2" stroke-dasharray="5 1.6"/><rect x="6.7" y="0.9" width="2.2" height="2.2" fill="#9ccdf2" stroke="#2b5f96" stroke-width="0.6"/><rect x="6.7" y="5.9" width="2.2" height="2.2" fill="#9ccdf2" stroke="#2b5f96" stroke-width="0.6"/><rect x="13.9" y="5.9" width="2.2" height="2.2" fill="#9ccdf2" stroke="#2b5f96" stroke-width="0.6"/></svg>
<svg width="5.2" height="2.9" viewBox="0 0 5.2 2.9" style="left:210px;top:109.3px"><path d="M0 0H5.2L2.6 2.9Z" fill="#e2e2e2"/></svg>
<svg width="18" height="18" viewBox="0 0 18 18" style="left:186px;top:125px" ><rect x="3.6" y="3.4" width="10.8" height="11" fill="#2a5f92"/>
<path d="M4 9L9 4M4 13.6L13.6 4M8.4 14L14 8.4M12.4 14L14 12.4" stroke="#b9dcf6" stroke-width="0.9"/>
<path d="M3.5 1V17M14.5 1V17M1.2 3.3H16.8M1.2 14.6H16.8" stroke="#ececec" stroke-width="1.2"/></svg>
<svg width="5.2" height="2.9" viewBox="0 0 5.2 2.9" style="left:210px;top:133.3px"><path d="M0 0H5.2L2.6 2.9Z" fill="#e2e2e2"/></svg>
<svg width="7.6" height="4" viewBox="0 0 7.6 4" style="left:126.4px;top:156.1px"><path d="M0 0H7.6L3.8 4Z" fill="#e2e2e2"/></svg>
<svg width="17" height="17" viewBox="0 0 17 17" style="left:232px;top:77px" ><path d="M8.4 0.8L11.6 4.6H9.3V7.5H12.2V5.2L16 8.4L12.2 11.6V9.3H9.3V12.2H11.6L8.4 16L5.2 12.2H7.5V9.3H4.6V11.6L0.8 8.4L4.6 5.2V7.5H7.5V4.6H5.2Z" fill="#f4f4f4"/></svg>
<svg width="17" height="17" viewBox="0 0 17 17" style="left:232px;top:101px" ><circle cx="4.3" cy="4.4" r="3" fill="none" stroke="#ececec" stroke-width="1.1"/>
<path d="M9.4 2.6H13.4V6" fill="none" stroke="#ececec" stroke-width="1.2"/><path d="M11.4 5.6H15.4L13.4 8.4Z" fill="#ececec"/>
<circle cx="8" cy="13.4" r="2.9" fill="none" stroke="#7db7e6" stroke-width="1.1"/><circle cx="13.8" cy="13.4" r="2.9" fill="none" stroke="#7db7e6" stroke-width="1.1"/></svg>
<svg width="18" height="18" viewBox="0 0 18 18" style="left:232px;top:125px" ><rect x="1.4" y="1.5" width="6.2" height="15.2" fill="none" stroke="#ececec" stroke-width="1.1"/>
<path d="M9.4 1.5H13L16.6 16.7H9.4" fill="none" stroke="#7db7e6" stroke-width="1.1"/>
<rect x="7" y="10.4" width="2.8" height="4.4" fill="#3b4453"/>
<path d="M5.2 12.6H10" stroke="#ececec" stroke-width="1.2"/><path d="M9.4 10.4L12.4 12.6L9.4 14.8Z" fill="#ececec"/></svg>
<svg width="18" height="18" viewBox="0 0 18 18" style="left:304px;top:77px" ><path d="M14.9 7.6A6.4 6.4 0 1 1 9.2 3.7" fill="none" stroke="#ececec" stroke-width="1.3"/><path d="M8.8 0.6L12.6 3.4L9.2 6.2Z" fill="#ececec"/></svg>
<svg width="18" height="18" viewBox="0 0 18 18" style="left:304px;top:101px" ><path d="M7.4 3.4V15.6H1.6Z" fill="none" stroke="#ececec" stroke-width="1.1"/><path d="M9.6 3.4V15.6H15.4Z" fill="none" stroke="#7db7e6" stroke-width="1.1"/></svg>
<svg width="18" height="18" viewBox="0 0 18 18" style="left:304px;top:125px" ><path d="M1.6 6.8V1.6H16.6V16.6H11.4" fill="none" stroke="#7db7e6" stroke-width="1.1"/><rect x="1.6" y="8.6" width="7.8" height="8" fill="none" stroke="#ececec" stroke-width="1.2"/></svg>
<svg width="18" height="18" viewBox="0 0 18 18" style="left:373px;top:77px" ><path d="M1 2.5H7.6" stroke="#ececec" stroke-width="1" stroke-dasharray="1.6 1"/><path d="M13.2 2.5H17" stroke="#ececec" stroke-width="1"/>
<path d="M4.6 3.4L6.8 2.6L12.4 11.4L10.6 12.4Z" fill="#ececec"/><path d="M10.4 1.2L12.6 1.4L12.2 11.8L10.2 11.6Z" fill="#ececec"/>
<circle cx="9.8" cy="14.5" r="1.9" fill="none" stroke="#ececec" stroke-width="1.2"/><circle cx="13.8" cy="12.7" r="1.9" fill="none" stroke="#ececec" stroke-width="1.2"/></svg>
<svg width="5.2" height="2.9" viewBox="0 0 5.2 2.9" style="left:429px;top:85.2px"><path d="M0 0H5.2L2.6 2.9Z" fill="#e2e2e2"/></svg>
<svg width="18" height="18" viewBox="0 0 18 18" style="left:373px;top:101px" ><path d="M1.4 11.4C1.6 6 4.6 2.4 9.8 1.6" fill="none" stroke="#a9cdea" stroke-width="1.1"/><path d="M11.4 1.6H17" stroke="#ececec" stroke-width="1.1"/><path d="M1.4 12.6V17.6" stroke="#ececec" stroke-width="1.1"/></svg>
<svg width="5.2" height="2.9" viewBox="0 0 5.2 2.9" style="left:431px;top:109.2px"><path d="M0 0H5.2L2.6 2.9Z" fill="#e2e2e2"/></svg>
<svg width="18" height="18" viewBox="0 0 18 18" style="left:373px;top:125px" ><rect x="2.2" y="2.4" width="5.2" height="5.2" fill="none" stroke="#ececec" stroke-width="1.1"/>
<rect x="10.2" y="2.4" width="5.2" height="5.2" fill="none" stroke="#7db7e6" stroke-width="1.1"/>
<rect x="2.2" y="10.4" width="5.2" height="5.2" fill="none" stroke="#7db7e6" stroke-width="1.1"/>
<rect x="10.2" y="10.4" width="5.2" height="5.2" fill="none" stroke="#7db7e6" stroke-width="1.1"/></svg>
<svg width="5.2" height="2.9" viewBox="0 0 5.2 2.9" style="left:431px;top:133.2px"><path d="M0 0H5.2L2.6 2.9Z" fill="#e2e2e2"/></svg>
<svg width="19" height="18" viewBox="0 0 19 18" style="left:448px;top:77px" ><path d="M5.4 11.2L15.4 1.6L17.6 1.2V6.2L8.4 15Z" fill="#f6c97c"/><path d="M5.6 11L8.6 14.8L7.4 15.6L4.8 12.2Z" fill="#fff3e0"/>
<circle cx="5.6" cy="13.4" r="2.1" fill="#e8636d"/>
<path d="M0.8 16.6H3.6" stroke="#ececec" stroke-width="1.1"/><path d="M9 16.6H17.2" stroke="#7db7e6" stroke-width="1.1"/></svg>
<svg width="18" height="18" viewBox="0 0 18 18" style="left:448px;top:101px" ><rect x="1.6" y="6.6" width="10" height="9.6" fill="none" stroke="#7db7e6" stroke-width="1"/><rect x="3.8" y="6.6" width="7.8" height="9.6" fill="none" stroke="#ececec" stroke-width="1"/>
<path d="M1.6 6.6L5.6 2.4H16.4L11.6 6.6M16.4 2.4V12L11.6 16.2M6.6 4.4H13.6" fill="none" stroke="#7db7e6" stroke-width="1"/></svg>
<svg width="18" height="18" viewBox="0 0 18 18" style="left:448px;top:125px" ><path d="M17 3.6H7.4A5.6 5.6 0 0 0 7.4 14.8H17" fill="none" stroke="#7db7e6" stroke-width="1.1"/><path d="M17 6.6H7.4A2.7 2.7 0 0 0 7.4 12H17" fill="none" stroke="#ececec" stroke-width="1.1"/></svg>
<svg width="7.6" height="4" viewBox="0 0 7.6 4" style="left:369.2px;top:156.1px"><path d="M0 0H7.6L3.8 4Z" fill="#e2e2e2"/></svg>
<span class="t" style="left:487.2px;top:71.69px;font-size:38.4px;line-height:44px;color:#e4e4e8;-webkit-text-stroke:0.5px #e4e4e8;">A</span>
<svg width="5.3" height="2.9" viewBox="0 0 5.3 2.9" style="left:496.8px;top:130.2px"><path d="M0 0H5.3L2.65 2.9Z" fill="#e2e2e2"/></svg>
<svg width="40" height="36" viewBox="0 0 40 36" style="left:532px;top:75px" ><path d="M4.4 2V34.4M35.4 2V34.4" stroke="#ececec" stroke-width="1.2"/><path d="M7 8.6H33" stroke="#ececec" stroke-width="1.1"/>
<path d="M5.4 8.6L9.4 6.6V10.6ZM34.4 8.6L30.4 6.6V10.6Z" fill="#ececec"/>
<g fill="#fbe2a6"><path d="M19.8 16.4L18.2 24H21.4Z"/><path d="M10.6 20.2L14 26.4L17 23.8Z"/><path d="M29 20.2L25.6 26.4L22.6 23.8Z"/><path d="M7.6 29.6L14.6 27.6V31.4Z"/><path d="M32 29.6L25 27.6V31.4Z"/></g></svg>
<svg width="18" height="18" viewBox="0 0 18 18" style="left:588px;top:77px" ><path d="M1.5 2V16M16.4 2V16" stroke="#ececec" stroke-width="1.2"/><path d="M3 6.6H15" stroke="#7db7e6" stroke-width="1.1"/><path d="M2.4 6.6L4.6 5.4V7.8ZM15.6 6.6L13.4 5.4V7.8Z" fill="#7db7e6"/></svg>
<svg width="5.2" height="2.9" viewBox="0 0 5.2 2.9" style="left:650px;top:85.2px"><path d="M0 0H5.2L2.6 2.9Z" fill="#e2e2e2"/></svg>
<svg width="18" height="18" viewBox="0 0 18 18" style="left:588px;top:101px" ><circle cx="13.6" cy="5.7" r="3.1" fill="none" stroke="#ececec" stroke-width="1.1"/><path d="M10.4 5.6H7.4L3.4 12.6" fill="none" stroke="#ececec" stroke-width="1.1"/><path d="M1 15.8L1.6 11.4L5.4 13.6Z" fill="#ececec"/></svg>
<svg width="5.2" height="2.9" viewBox="0 0 5.2 2.9" style="left:653px;top:109.2px"><path d="M0 0H5.2L2.6 2.9Z" fill="#e2e2e2"/></svg>
<svg width="18" height="18" viewBox="0 0 18 18" style="left:588px;top:125px" ><rect x="1.5" y="2.7" width="15" height="13" fill="none" stroke="#ececec" stroke-width="1.1"/><path d="M1.5 5.8H16.5M1.5 9H16.5M1.5 12.2H16.5M6.6 5.8V15.6M11.6 5.8V15.6" stroke="#ececec" stroke-width="1"/></svg>
<svg width="7.6" height="4" viewBox="0 0 7.6 4" style="left:599.4px;top:156.1px"><path d="M0 0H7.6L3.8 4Z" fill="#e2e2e2"/></svg>
<svg width="36" height="36" viewBox="0 0 36 36" style="left:678px;top:75px" >
<path d="M2 26L13.2 14H29L18.5 26Z" fill="#dcdce0" stroke="#3b4453" stroke-width="1"/>
<path d="M2 20L13.2 8H29L18.5 20Z" fill="#dcdce0" stroke="#3b4453" stroke-width="1"/>
<path d="M2 14L13.2 2H29L18.5 14Z" fill="#dcdce0" stroke="#3b4453" stroke-width="1"/>
<rect x="24.6" y="13.6" width="5" height="3" fill="#e6e6e6" stroke="#3b4453" stroke-width="0.8"/>
<rect x="20.6" y="15.4" width="14" height="19.2" fill="#f3f3f3" stroke="#3b4453" stroke-width="0.9"/>
<rect x="22.6" y="17.4" width="9.8" height="7.4" fill="#6fb9f2" stroke="#223a5a" stroke-width="1.1"/>
<path d="M24.4 28.2H32M24.4 28.2L26.4 26.8M24.4 28.2L26.4 29.6M23.6 31.6H31.2M31.2 31.6L29.2 30.2M31.2 31.6L29.2 33" stroke="#555a62" stroke-width="0.9" fill="none"/>
</svg>
<div class="b" style="left:728px;top:76px;width:206px;height:20px;background:#4c566b;box-shadow:0 0 0 1px #2b323f"></div>
<div class="b" style="left:1182px;top:76px;width:178px;height:20px;background:#4c566b;box-shadow:0 0 0 1px #2b323f"></div>
<div class="b" style="left:1182px;top:100px;width:178px;height:20px;background:#4c566b;box-shadow:0 0 0 1px #2b323f"></div>
<div class="b" style="left:1182px;top:124px;width:178px;height:20px;background:#4c566b;box-shadow:0 0 0 1px #2b323f"></div>
<svg width="7.6" height="3.8" viewBox="0 0 7.6 3.8" style="left:925px;top:84.4px"><path d="M0 0H7.6L3.8 3.8Z" fill="#e8e8e8"/></svg>
<svg width="7.6" height="3.8" viewBox="0 0 7.6 3.8" style="left:1351px;top:84.4px"><path d="M0 0H7.6L3.8 3.8Z" fill="#e8e8e8"/></svg>
<svg width="7.6" height="3.8" viewBox="0 0 7.6 3.8" style="left:1351px;top:108.4px"><path d="M0 0H7.6L3.8 3.8Z" fill="#e8e8e8"/></svg>
<svg width="7.6" height="3.8" viewBox="0 0 7.6 3.8" style="left:1351px;top:132.4px"><path d="M0 0H7.6L3.8 3.8Z" fill="#e8e8e8"/></svg>
<svg width="54" height="18" viewBox="0 0 54 18" style="left:731px;top:77px" >
<circle cx="8" cy="7.4" r="5.2" fill="#fbc867" stroke="#3b4152" stroke-width="0.6"/>
<path d="M6 12.9H10V14.6L9.2 16H6.8L6 14.6Z" fill="#f2f6fb"/>
<circle cx="26.4" cy="8.5" r="4.5" fill="#fbc56a"/>
<g stroke="#e9e4d2" stroke-width="1.1"><path d="M26.4 1V2.8M26.4 14.2V16M19 8.5H20.8M32 8.5H33.8M21.2 3.3L22.4 4.5M30.4 12.5L31.6 13.7M21.2 13.7L22.4 12.5M30.4 4.5L31.6 3.3"/></g>
<path d="M44.6 8V5.6A3.6 3.6 0 0 1 51.6 4.8" fill="none" stroke="#fbd58a" stroke-width="1.8"/>
<rect x="39.2" y="7.6" width="10.8" height="8.6" fill="#fbc867"/>
<rect x="44" y="10.2" width="1.3" height="3" fill="#443a20"/>
</svg>
<div class="b" style="left:790px;top:79px;width:14px;height:14.2px;background:#007fff;box-shadow:inset 0 0 0 1px #b3dbff"></div>
<div class="b" style="left:1188px;top:78.2px;width:16px;height:15.8px;background:#007fff;box-shadow:inset 0 0 0 1px #b3dbff"></div>
<div class="b" style="left:1188px;top:108.8px;width:64px;height:1.5px;background:#f4f4f4"></div>
<div class="b" style="left:1188px;top:133.6px;width:64px;height:1.5px;background:#f4f4f4"></div>
<svg width="17" height="17" viewBox="0 0 17 17" style="left:731px;top:102px" ><path d="M0.2 6.6L5.2 0.6H13.6L8.6 6.6Z" fill="#dcdce0"/><circle cx="12.4" cy="9.4" r="3.7" fill="#5fd2dc" stroke="#3b4453" stroke-width="0.9"/><path d="M10.8 13.4H14V14.9L13.2 16H11.6L10.8 14.9Z" fill="#f4f4f4"/></svg>
<svg width="17" height="17" viewBox="0 0 17 17" style="left:755px;top:102px" ><path d="M0.2 13.8L5.2 7.8H13.6L8.6 13.8Z" fill="#7cc3f3" stroke="#3b4453" stroke-width="0.9"/><path d="M0.2 10.4L5.2 4.4H13.6L8.6 10.4Z" fill="#dcdce0" stroke="#3b4453" stroke-width="0.9"/><path d="M0.2 6.6L5.2 0.6H13.6L8.6 6.6Z" fill="#dcdce0" stroke="#3b4453" stroke-width="0.9"/><path d="M16 7.4L10.6 12.8" stroke="#f0f0f0" stroke-width="1.2"/><path d="M8.6 15L9.4 10.6L13 14.2Z" fill="#f0f0f0"/></svg>
<svg width="17" height="17" viewBox="0 0 17 17" style="left:779px;top:102px" ><path d="M0.2 6.6L5.2 0.6H13.6L8.6 6.6Z" fill="#dcdce0"/><g stroke="#5fd2dc" stroke-width="1.1" fill="none"><path d="M11.4 6.4V15.6M7.4 8.7L15.4 13.3M7.4 13.3L15.4 8.7"/><path d="M9.2 9.7L11.4 8.5L13.6 9.7V12.3L11.4 13.5L9.2 12.3Z"/></g></svg>
<svg width="17" height="17" viewBox="0 0 17 17" style="left:803px;top:102px" ><path d="M0.2 6.6L5.2 0.6H13.6L8.6 6.6Z" fill="#dcdce0"/><path d="M9.4 10.8V9.4A2.2 2.2 0 0 1 13.8 9.4V10.8" fill="none" stroke="#5fd2dc" stroke-width="1.3"/><rect x="7.9" y="10.6" width="7.4" height="5.4" fill="#5fd2dc"/><rect x="11.1" y="12.6" width="1.1" height="1.5" fill="#1f4a50"/></svg>
<svg width="17" height="17" viewBox="0 0 17 17" style="left:827px;top:102px" ><path d="M0.2 15.8L5.8 9.6H15.8L10.2 15.8Z" fill="#dcdce0" stroke="#3b4453" stroke-width="0.9"/><path d="M0.2 12.8L5.8 6.6H15.8L10.2 12.8Z" fill="#dcdce0" stroke="#3b4453" stroke-width="0.9"/><path d="M0.2 9.6L5.8 3.4H15.8L10.2 9.6Z" fill="#8ccaf6" stroke="#3b4453" stroke-width="0.9"/><circle cx="8.2" cy="3" r="3.2" fill="#d8d8dc" stroke="#3b4453" stroke-width="0.7"/></svg>
<svg width="17" height="17" viewBox="0 0 17 17" style="left:731px;top:126px" ><path d="M0.2 13.8L5.2 7.8H13.6L8.6 13.8Z" fill="#dcdce0" stroke="#3b4453" stroke-width="0.9"/><path d="M0.2 10.4L5.2 4.4H13.6L8.6 10.4Z" fill="#dcdce0" stroke="#3b4453" stroke-width="0.9"/><path d="M0.2 6.6L5.2 0.6H13.6L8.6 6.6Z" fill="#dcdce0" stroke="#3b4453" stroke-width="0.9"/><circle cx="12.4" cy="9.4" r="3.7" fill="#fbc56a" stroke="#3b4453" stroke-width="0.9"/><path d="M10.8 13.4H14V14.9L13.2 16H11.6L10.8 14.9Z" fill="#f4f4f4"/></svg>
<svg width="17" height="17" viewBox="0 0 17 17" style="left:755px;top:126px" ><path d="M0.2 13.8L5.2 7.8H13.6L8.6 13.8Z" fill="#7cc3f3" stroke="#3b4453" stroke-width="0.9"/><path d="M0.2 10.4L5.2 4.4H13.6L8.6 10.4Z" fill="#dcdce0" stroke="#3b4453" stroke-width="0.9"/><path d="M0.2 6.6L5.2 0.6H13.6L8.6 6.6Z" fill="#dcdce0" stroke="#3b4453" stroke-width="0.9"/><path d="M8.8 15.4L14.2 10" stroke="#f0f0f0" stroke-width="1.2"/><path d="M16.2 7.8L15.4 12.2L11.8 8.6Z" fill="#f0f0f0"/></svg>
<svg width="17" height="17" viewBox="0 0 17 17" style="left:779px;top:126px" ><path d="M0.2 13.8L5.2 7.8H13.6L8.6 13.8Z" fill="#dcdce0" stroke="#3b4453" stroke-width="0.9"/><path d="M0.2 10.4L5.2 4.4H13.6L8.6 10.4Z" fill="#dcdce0" stroke="#3b4453" stroke-width="0.9"/><path d="M0.2 6.6L5.2 0.6H13.6L8.6 6.6Z" fill="#dcdce0" stroke="#3b4453" stroke-width="0.9"/><circle cx="11.6" cy="11.6" r="4.6" fill="#3b4453"/><circle cx="11.6" cy="11.6" r="2.9" fill="#fbc56a"/><g fill="#f2ead6"><circle cx="11.6" cy="7.4" r="0.7"/><circle cx="11.6" cy="15.8" r="0.7"/><circle cx="7.4" cy="11.6" r="0.7"/><circle cx="15.8" cy="11.6" r="0.7"/><circle cx="8.6" cy="8.6" r="0.7"/><circle cx="14.6" cy="8.6" r="0.7"/><circle cx="8.6" cy="14.6" r="0.7"/><circle cx="14.6" cy="14.6" r="0.7"/></g></svg>
<svg width="17" height="17" viewBox="0 0 17 17" style="left:803px;top:126px" ><path d="M0.2 7.4L5.2 1.4H13.6L8.6 7.4Z" fill="#dcdce0"/><path d="M10.4 11V9.4A2.3 2.3 0 0 1 15 9.2" fill="none" stroke="#fbd58a" stroke-width="1.3"/><rect x="7" y="11" width="7.2" height="5" fill="#fbc867"/><rect x="10.2" y="12.8" width="1.1" height="1.5" fill="#443a20"/></svg>
<svg width="17" height="17" viewBox="0 0 17 17" style="left:827px;top:126px" ><path d="M0.2 13.8L5.2 7.8H13.6L8.6 13.8Z" fill="#dcdce0" stroke="#3b4453" stroke-width="0.9"/><path d="M0.2 10.4L5.2 4.4H13.6L8.6 10.4Z" fill="#dcdce0" stroke="#3b4453" stroke-width="0.9"/><path d="M0.2 6.6L5.2 0.6H13.6L8.6 6.6Z" fill="#dcdce0" stroke="#3b4453" stroke-width="0.9"/><g transform="translate(11.2,11.6) rotate(45)"><rect x="-2.6" y="-1" width="5.4" height="4.6" fill="#fbd27c" stroke="#2b2f3a" stroke-width="0.7"/><rect x="-2.6" y="-3.6" width="5.4" height="2.6" fill="#f4f4f4" stroke="#2b2f3a" stroke-width="0.7"/><rect x="-0.8" y="-6.4" width="1.8" height="3" fill="#f4f4f4"/></g></svg>
<svg width="7.6" height="4" viewBox="0 0 7.6 4" style="left:817.4px;top:156.1px"><path d="M0 0H7.6L3.8 4Z" fill="#e2e2e2"/></svg>
<svg width="36" height="36" viewBox="0 0 36 36" style="left:942px;top:74px" >
<path d="M16.2 1H27.2L33 6.8V25H16.2Z" fill="#7cc4f8"/>
<path d="M27.2 1V6.8H33Z" fill="#cfe8fb" stroke="#3b4453" stroke-width="0.8"/>
<rect x="2.6" y="11.6" width="20" height="13.6" fill="#6d6e78" stroke="#3b4453" stroke-width="2.6"/>
<rect x="2.6" y="11.6" width="20" height="13.6" fill="#6d6e78" stroke="#eaeaea" stroke-width="1.1"/>
<circle cx="22.4" cy="25.5" r="7.2" fill="#6d6e78" fill-opacity="0.92" stroke="#eaeaea" stroke-width="1.2"/>
<path d="M15.4 25.5H23V18.4" fill="none" stroke="#eaeaea" stroke-width="1.1" opacity="0.8"/>
<rect x="0.6" y="24" width="3" height="3" fill="#eaeaea"/>
</svg>
<svg width="5.3" height="2.9" viewBox="0 0 5.3 2.9" style="left:957px;top:129.2px"><path d="M0 0H5.3L2.65 2.9Z" fill="#e2e2e2"/></svg>
<svg width="18" height="18" viewBox="0 0 18 18" style="left:982px;top:77px" ><rect x="2.2" y="5.4" width="8.6" height="7.6" fill="#6d6e78"/><path d="M2.2 5.2V13H8" fill="none" stroke="#eaeaea" stroke-width="1.1"/><path d="M2.2 5.4H7" stroke="#eaeaea" stroke-width="1.1"/><rect x="0.6" y="12" width="2.2" height="2.2" fill="#eaeaea"/><circle cx="11" cy="13" r="3" fill="#6d6e78" stroke="#eaeaea" stroke-width="1"/><path d="M8.4 13H11V10.4" fill="none" stroke="#eaeaea" stroke-width="0.8"/><path d="M12.40 0.80L13.13 3.44L15.51 2.09L14.16 4.47L16.80 5.20L14.16 5.93L15.51 8.31L13.13 6.96L12.40 9.60L11.67 6.96L9.29 8.31L10.64 5.93L8.00 5.20L10.64 4.47L9.29 2.09L11.67 3.44Z" fill="#fbd27c"/></svg>
<svg width="18" height="18" viewBox="0 0 18 18" style="left:982px;top:101px" ><rect x="2.2" y="5.4" width="8.6" height="7.6" fill="#6d6e78"/><path d="M2.2 5.2V13H8" fill="none" stroke="#eaeaea" stroke-width="1.1"/><path d="M2.2 5.4H7" stroke="#eaeaea" stroke-width="1.1"/><rect x="0.6" y="12" width="2.2" height="2.2" fill="#eaeaea"/><circle cx="11" cy="13" r="3" fill="#6d6e78" stroke="#eaeaea" stroke-width="1"/><path d="M8.4 13H11V10.4" fill="none" stroke="#eaeaea" stroke-width="0.8"/><g transform="translate(7.6,9.6) rotate(-45)"><path d="M0 0L2.6 -1.6H9.4V1.6H2.6Z" fill="#fbd27c" stroke="#2b2f3a" stroke-width="0.6"/><path d="M0 0L2.6 -1.6V1.6Z" fill="#fff6e2"/><rect x="6.8" y="-1.6" width="2.6" height="3.2" fill="#e8636d"/></g></svg>
<svg width="18" height="18" viewBox="0 0 18 18" style="left:982px;top:125px" ><path d="M1.2 2.2H8.8L15 8.6L8.6 15.6L1.2 8.4Z" fill="#eeeeee"/><rect x="3.2" y="4.2" width="1.8" height="1.8" fill="#222"/><path d="M5.6 8.4L9 12" stroke="#555" stroke-width="0.8" stroke-dasharray="1 1"/><g transform="translate(7.8,9.4) rotate(-45)"><path d="M0 0L2.6 -1.6H9.4V1.6H2.6Z" fill="#fbd27c" stroke="#2b2f3a" stroke-width="0.6"/><path d="M0 0L2.6 -1.6V1.6Z" fill="#fff6e2"/><rect x="6.8" y="-1.6" width="2.6" height="3.2" fill="#e8636d"/></g></svg>
<svg width="5.2" height="2.9" viewBox="0 0 5.2 2.9" style="left:1086.6px;top:133.2px"><path d="M0 0H5.2L2.6 2.9Z" fill="#e2e2e2"/></svg>
<svg width="7.6" height="4" viewBox="0 0 7.6 4" style="left:1032.2px;top:156.1px"><path d="M0 0H7.6L3.8 4Z" fill="#e2e2e2"/></svg>
<svg width="34" height="34" viewBox="0 0 34 34" style="left:1114px;top:76px" >
<rect x="2" y="1" width="20" height="27.8" fill="#dddddf"/>
<rect x="4.4" y="3.4" width="13.6" height="10.2" fill="#8ccbf8" stroke="#23364f" stroke-width="1.2"/>
<path d="M5 19.4H7.4M10 19.4H16.6M5 24.6H10.6" stroke="#5c5f66" stroke-width="0.9"/>
<path d="M8.7 17.2V21.6M12.8 22.4V26.8" stroke="#5c5f66" stroke-width="1.6"/>
<g transform="translate(21.6,26.4) rotate(45)">
<rect x="-4.4" y="-1.4" width="9" height="7.4" fill="#fbd27c" stroke="#2b2f3a" stroke-width="0.8"/>
<path d="M-4.4 -1.4V-4.4H-1.2V-9.6H1.8V-4.4H4.6V-1.4Z" fill="#f6f6f6" stroke="#2b2f3a" stroke-width="0.6"/>
</g>
</svg>
<svg width="18" height="18" viewBox="0 0 18 18" style="left:1162px;top:77px" ><path d="M9.2 9L5.10 1.90A8.2 8.2 0 0 1 13.30 1.90Z" fill="#fbc02d"/><path d="M9.2 9L13.30 1.90A8.2 8.2 0 0 1 17.40 9.00Z" fill="#fb8c3a"/><path d="M9.2 9L17.40 9.00A8.2 8.2 0 0 1 13.30 16.10Z" fill="#f0443c"/><path d="M9.2 9L13.30 16.10A8.2 8.2 0 0 1 5.10 16.10Z" fill="#9a49f0"/><path d="M9.2 9L5.10 16.10A8.2 8.2 0 0 1 1.00 9.00Z" fill="#2196d8"/><path d="M9.2 9L1.00 9.00A8.2 8.2 0 0 1 5.10 1.90Z" fill="#38c172"/></svg>
<svg width="18" height="18" viewBox="0 0 18 18" style="left:1162px;top:101px" ><g fill="#e4e4e6"><rect x="1.1" y="1" width="16" height="1"/><rect x="1.1" y="4.1" width="16" height="2"/><rect x="1.1" y="8.2" width="16" height="2.9"/><rect x="1.1" y="13.2" width="16" height="3.8"/></g></svg>
<svg width="18" height="18" viewBox="0 0 18 18" style="left:1162px;top:125px" ><g stroke="#e4e4e6" stroke-width="1.1"><path d="M0.8 2.5H16.2" stroke-dasharray="1 1"/><path d="M0.8 5.5H16.2" stroke-dasharray="3 1"/><path d="M0.8 8.6H16.2"/><path d="M0.8 11.6H16.2" stroke-dasharray="3 1 1 1"/><path d="M0.8 14.5H16.2" stroke-dasharray="5 1.2"/></g></svg>
<svg width="7.6" height="4" viewBox="0 0 7.6 4" style="left:1251.5px;top:156.1px"><path d="M0 0H7.6L3.8 4Z" fill="#e2e2e2"/></svg>
<svg width="6" height="6" viewBox="0 0 6 6" style="left:1352.6px;top:155.2px" ><path d="M0.6 0.6L4.6 4.6M1.8 5H5V1.8" fill="none" stroke="#d6d6d6" stroke-width="1"/></svg>
<svg width="36" height="36" viewBox="0 0 36 36" style="left:1367px;top:76px" >
<path d="M6 6.6H2.6V32.4H6M19 32.4H22.6V19" fill="none" stroke="#ececec" stroke-width="1.3"/>
<rect x="8.4" y="9.8" width="9.6" height="6.8" fill="#4f7fb6" stroke="#8cc4f2" stroke-width="1"/>
<circle cx="12.8" cy="25.2" r="4.6" fill="#7a7b84" stroke="#d8d8d8" stroke-width="1"/>
<path d="M25.60 2.20L26.75 6.83L30.83 4.37L28.37 8.45L33.00 9.60L28.37 10.75L30.83 14.83L26.75 12.37L25.60 17.00L24.45 12.37L20.37 14.83L22.83 10.75L18.20 9.60L22.83 8.45L20.37 4.37L24.45 6.83Z" fill="#fbc867"/></svg>
<svg width="18" height="18" viewBox="0 0 18 18" style="left:1409px;top:77px" ><path d="M4 2H2V15.4H4M9.8 2H11.8V15.4H9.8" fill="none" stroke="#ececec" stroke-width="1.1"/><rect x="4.4" y="3.6" width="4.6" height="3.8" fill="#4f7fb6" stroke="#8cc4f2" stroke-width="0.9"/><circle cx="6.8" cy="11.6" r="2.4" fill="#7a7b84" stroke="#d0d0d0" stroke-width="0.9"/><path d="M11.4 6.4L16.4 11.4M16.4 6.4L11.4 11.4" stroke="#ee4e60" stroke-width="1.8"/></svg>
<svg width="18" height="18" viewBox="0 0 18 18" style="left:1409px;top:101px" ><path d="M4 2H2V15.4H4M9.8 2H11.8V15.4H9.8" fill="none" stroke="#ececec" stroke-width="1.1"/><rect x="4.4" y="3.6" width="4.6" height="3.8" fill="#4f7fb6" stroke="#8cc4f2" stroke-width="0.9"/><circle cx="6.8" cy="11.6" r="2.4" fill="#7a7b84" stroke="#d0d0d0" stroke-width="0.9"/><g transform="translate(8.8,16.2) rotate(-45)"><path d="M0 0L2.6 -1.6H9.4V1.6H2.6Z" fill="#fbd27c" stroke="#2b2f3a" stroke-width="0.6"/><path d="M0 0L2.6 -1.6V1.6Z" fill="#fff6e2"/><rect x="6.8" y="-1.6" width="2.6" height="3.2" fill="#e8636d"/></g></svg>
<div class="b" style="left:1406px;top:123px;width:24px;height:22px;background:#3e5070;box-shadow:inset 0 0 0 1px #5a9bd8"></div>
<svg width="18" height="18" viewBox="0 0 18 18" style="left:1409px;top:125px" ><path d="M4 2H2V15.4H4M9.8 2H11.8V15.4H9.8" fill="none" stroke="#ececec" stroke-width="1.1"/><rect x="4.4" y="3.6" width="4.6" height="3.8" fill="#5fc07a" stroke="#8fe0a0" stroke-width="0.9"/><circle cx="6.8" cy="11.6" r="2.4" fill="#5fc07a" stroke="#8fe0a0" stroke-width="0.9"/><path d="M9.6 7.6L15.4 13.4L13 13.6L14.6 16.8L13.2 17.4L11.8 14.2L9.6 16Z" fill="#f6f6f6" stroke="#2b2f3a" stroke-width="0.5"/></svg>
<svg width="7.6" height="4" viewBox="0 0 7.6 4" style="left:1416.3px;top:156.1px"><path d="M0 0H7.6L3.8 4Z" fill="#e2e2e2"/></svg>
<svg width="30" height="9" viewBox="0 0 30 9" style="left:1454px;top:88px" ><rect x="0.8" y="1.4" width="28.6" height="6.4" fill="#fbc867"/><g stroke="#3b4453" stroke-width="0.9"><path d="M3.4 1V3.6M6.4 1V3M9.4 1V3M12.4 1V3.6M15.4 1V3M18.4 1V3M21.4 1V3.6M24.4 1V3M27.2 1V3"/></g></svg>
<svg width="5.3" height="2.9" viewBox="0 0 5.3 2.9" style="left:1465.9px;top:130.2px"><path d="M0 0H5.3L2.65 2.9Z" fill="#e2e2e2"/></svg>
<svg width="18" height="18" viewBox="0 0 18 18" style="left:1506px;top:77px" ><path d="M2 4.6L9 10.8L6 11L7.8 14.6L6.4 15.2L4.8 11.8L2 13.8Z" fill="#f6f6f6" stroke="#2b2f3a" stroke-width="0.5"/><path d="M7.4 1L4.6 5H6.8L6 8.4L9.6 3.6H7.4Z" fill="#fbc867"/><rect x="8.6" y="6.6" width="8.4" height="8.4" fill="#f4f4f4"/><g stroke="#3d8fd6" stroke-width="0.9"><path d="M10 8.8H11.2M12.2 8.8H15.8M10 10.8H11.2M12.2 10.8H15.8M10 12.8H11.2M12.2 12.8H15.8"/></g></svg>
<svg width="18" height="18" viewBox="0 0 18 18" style="left:1506px;top:101px" ><rect x="1.4" y="1.6" width="14" height="14" fill="#35584a" stroke="#8fe0a0" stroke-width="1" stroke-dasharray="1.6 1"/><path d="M3.6 13.4V4H12.8V7H6.8V13.4Z" fill="#93dba6"/><path d="M8 13.4V8.4H13.4V13.4Z" fill="#93dba6"/><path d="M9.6 6.6L15.4 12.4L13 12.6L14.6 15.8L13.2 16.4L11.8 13.2L9.6 15Z" fill="#f6f6f6" stroke="#2b2f3a" stroke-width="0.5"/></svg>
<svg width="18" height="18" viewBox="0 0 18 18" style="left:1506px;top:125px" ><rect x="2.6" y="1.4" width="12.2" height="15.4" fill="#d6d6d8"/><rect x="4.4" y="3.2" width="8.6" height="3" fill="#6d6e78"/><g fill="#6d6e78"><rect x="4.4" y="8" width="2" height="2"/><rect x="7.7" y="8" width="2" height="2"/><rect x="11" y="8" width="2" height="2"/><rect x="4.4" y="11" width="2" height="2"/><rect x="7.7" y="11" width="2" height="2"/><rect x="11" y="11" width="2" height="2"/><rect x="4.4" y="14" width="2" height="1.6"/><rect x="7.7" y="14" width="2" height="1.6"/><rect x="11" y="14" width="2" height="1.6"/></g></svg>
<svg width="7.6" height="4" viewBox="0 0 7.6 4" style="left:1499.2px;top:156.1px"><path d="M0 0H7.6L3.8 4Z" fill="#e2e2e2"/></svg>
<svg width="30" height="34" viewBox="0 0 30 34" style="left:1542px;top:76px" >
<rect x="1.6" y="4" width="22.4" height="25" fill="#e0a862"/>
<path d="M9.4 3.8V2.4H11.4V1H14.4V2.4H16.4V3.8Z" fill="#f4f4f4"/><rect x="8" y="3.4" width="9.6" height="1.8" fill="#f4f4f4"/>
<path d="M10.4 10.8H22L28 16.8V32.6H10.4Z" fill="#e2e2e4" stroke="#3b4453" stroke-width="0.9"/>
<path d="M22 10.8V16.8H28Z" fill="#f8f8f8" stroke="#3b4453" stroke-width="0.8"/>
</svg>
<svg width="5.3" height="2.9" viewBox="0 0 5.3 2.9" style="left:1554.6px;top:130.2px"><path d="M0 0H5.3L2.65 2.9Z" fill="#e2e2e2"/></svg>
<svg width="19" height="18" viewBox="0 0 19 18" style="left:1586px;top:77px" ><rect x="1.4" y="1.4" width="11.6" height="12.4" fill="#c8c8cc"/><g stroke="#50535c" stroke-width="1"><path d="M3 4H11M3 6.6H9M3 9.2H8M3 11.6H7"/></g><path d="M8.4 5.6L15.6 13.6M16.6 5.6L9.6 13.6" stroke="#f4f4f4" stroke-width="1.2"/><circle cx="9.4" cy="15" r="1.7" fill="none" stroke="#f4f4f4" stroke-width="1"/><circle cx="15.4" cy="15" r="1.7" fill="none" stroke="#f4f4f4" stroke-width="1"/></svg>
<svg width="5.2" height="2.9" viewBox="0 0 5.2 2.9" style="left:1608px;top:85.2px"><path d="M0 0H5.2L2.6 2.9Z" fill="#e2e2e2"/></svg>
<svg width="18" height="18" viewBox="0 0 18 18" style="left:1586px;top:101px" ><path d="M2.4 1.6H9L11 3.6V13H2.4Z" fill="#c4c4c8"/><path d="M5.4 4.6H11.4L15 8.2V17H5.4Z" fill="#e2e2e4" stroke="#3b4453" stroke-width="0.9"/><path d="M11.4 4.6V8.2H15Z" fill="#f8f8f8" stroke="#3b4453" stroke-width="0.7"/></svg>
<svg width="5.2" height="2.9" viewBox="0 0 5.2 2.9" style="left:1608px;top:109.2px"><path d="M0 0H5.2L2.6 2.9Z" fill="#e2e2e2"/></svg>
<svg width="33" height="25" viewBox="0 0 33 25" style="left:1636px;top:81px" ><path d="M0 0H14.3V10H32V24H0Z" fill="#dededf"/></svg>
<svg width="5.3" height="2.9" viewBox="0 0 5.3 2.9" style="left:1649.8px;top:130.2px"><path d="M0 0H5.3L2.65 2.9Z" fill="#e2e2e2"/></svg>
<svg width="7.6" height="4" viewBox="0 0 7.6 4" style="left:1657.2px;top:156.1px"><path d="M0 0H7.6L3.8 4Z" fill="#e2e2e2"/></svg>
<svg width="6" height="6" viewBox="0 0 6 6" style="left:1671.6px;top:155.2px" ><path d="M0.6 0.6L4.6 4.6M1.8 5H5V1.8" fill="none" stroke="#d6d6d6" stroke-width="1"/></svg>
<svg width="200" height="31" viewBox="0 0 200 31" style="left:0px;top:168px" >
<path d="M66.7 3H146.9L137.5 27H56.8Z" fill="#3a4351"/>
<path d="M16.1 7.5L9.9 22.5M185.4 7.5L179.2 22.5" stroke="#4a5160" stroke-width="1"/>
<path d="M127.4 11.4L134.8 18.8M134.8 11.4L127.4 18.8" stroke="#b9bdc7" stroke-width="1.7"/>
<path d="M162 9.3V21M156 15.1H168" stroke="#f2f2f2" stroke-width="2"/>
</svg>
<div id="texts">
<span class="t" style="left:327px;top:3.84px;font-size:12px;color:#9dcbf2;letter-spacing:-0.758px;">Share</span>
<span class="t" style="left:748px;top:3.84px;font-size:12px;color:#e8e8e8;letter-spacing:-0.138px;">Autodesk AutoCAD 2023</span>
<span class="t" style="left:890px;top:3.84px;font-size:12px;color:#e8e8e8;letter-spacing:0.031px;">uhouse.dwg</span>
<span class="t" style="left:1359px;top:3.02px;font-size:11.5px;color:#b9bfcc;letter-spacing:-0.483px;font-style:italic;">Type a keyword or phrase</span>
<span class="t" style="left:1584px;top:3.84px;font-size:12px;color:#f2f2f2;letter-spacing:-0.609px;">al7161</span>
<span class="t" style="left:14px;top:26.84px;font-size:12px;color:#d2d5da;letter-spacing:-0.448px;">File</span>
<span class="t" style="left:56px;top:26.84px;font-size:12px;color:#d2d5da;letter-spacing:-0.229px;">Edit</span>
<span class="t" style="left:100px;top:26.84px;font-size:12px;color:#d2d5da;letter-spacing:-0.266px;">View</span>
<span class="t" style="left:149px;top:26.84px;font-size:12px;color:#d2d5da;letter-spacing:-0.203px;">Insert</span>
<span class="t" style="left:202px;top:26.84px;font-size:12px;color:#d2d5da;">Format</span>
<span class="t" style="left:264px;top:26.84px;font-size:12px;color:#d2d5da;letter-spacing:-0.254px;">Tools</span>
<span class="t" style="left:316px;top:26.84px;font-size:12px;color:#d2d5da;letter-spacing:-0.339px;">Draw</span>
<span class="t" style="left:367px;top:26.84px;font-size:12px;color:#d2d5da;letter-spacing:0.037px;">Dimension</span>
<span class="t" style="left:448px;top:26.84px;font-size:12px;color:#d2d5da;letter-spacing:0.531px;">Modify</span>
<span class="t" style="left:510px;top:26.84px;font-size:12px;color:#d2d5da;letter-spacing:-0.113px;">Parametric</span>
<span class="t" style="left:591px;top:26.84px;font-size:12px;color:#d2d5da;letter-spacing:0.263px;">Window</span>
<span class="t" style="left:659px;top:26.84px;font-size:12px;color:#d2d5da;letter-spacing:0.104px;">Help</span>
<span class="t" style="left:708px;top:26.84px;font-size:12px;color:#d2d5da;letter-spacing:-0.727px;">Express</span>
<span class="t" style="left:13px;top:50.84px;font-size:12px;color:#ffffff;letter-spacing:0.328px;">Home</span>
<span class="t" style="left:66px;top:50.84px;font-size:12px;color:#d6d6d6;letter-spacing:-0.203px;">Insert</span>
<span class="t" style="left:115px;top:50.84px;font-size:12px;color:#d6d6d6;letter-spacing:0.136px;">Annotate</span>
<span class="t" style="left:184px;top:50.84px;font-size:12px;color:#d6d6d6;letter-spacing:-0.113px;">Parametric</span>
<span class="t" style="left:261px;top:50.84px;font-size:12px;color:#d6d6d6;letter-spacing:-0.355px;">3D Tools</span>
<span class="t" style="left:325px;top:50.84px;font-size:12px;color:#d6d6d6;letter-spacing:-0.352px;">Visualize</span>
<span class="t" style="left:390px;top:50.84px;font-size:12px;color:#d6d6d6;letter-spacing:-0.266px;">View</span>
<span class="t" style="left:435px;top:50.84px;font-size:12px;color:#d6d6d6;letter-spacing:-0.075px;">Manage</span>
<span class="t" style="left:498px;top:50.84px;font-size:12px;color:#d6d6d6;letter-spacing:0.394px;">Output</span>
<span class="t" style="left:556px;top:50.84px;font-size:12px;color:#d6d6d6;letter-spacing:0.219px;">Add-ins</span>
<span class="t" style="left:618px;top:50.84px;font-size:12px;color:#d6d6d6;letter-spacing:-0.037px;">Collaborate</span>
<span class="t" style="left:699px;top:50.84px;font-size:12px;color:#d6d6d6;letter-spacing:-0.457px;">Express Tools</span>
<span class="t" style="left:788px;top:50.84px;font-size:12px;color:#d6d6d6;letter-spacing:-0.172px;">Featured Apps</span>
<span class="t" style="left:12px;top:111.84px;font-size:12px;color:#f2f2f2;letter-spacing:-0.229px;">Line</span>
<span class="t" style="left:45px;top:111.84px;font-size:12px;color:#f2f2f2;">Polyline</span>
<span class="t" style="left:101px;top:111.84px;font-size:12px;color:#f2f2f2;letter-spacing:-0.134px;">Circle</span>
<span class="t" style="left:153px;top:111.84px;font-size:12px;color:#f2f2f2;">Arc</span>
<span class="t" style="left:489px;top:111.84px;font-size:12px;color:#f2f2f2;letter-spacing:-0.339px;">Text</span>
<span class="t" style="left:524px;top:111.84px;font-size:12px;color:#f2f2f2;letter-spacing:0.037px;">Dimension</span>
<span class="t" style="left:683px;top:111.84px;font-size:12px;color:#f2f2f2;letter-spacing:-0.508px;">Layer</span>
<span class="t" style="left:945px;top:111.84px;font-size:12px;color:#f2f2f2;letter-spacing:-0.203px;">Insert</span>
<span class="t" style="left:1114px;top:111.84px;font-size:12px;color:#f2f2f2;letter-spacing:0.328px;">Match</span>
<span class="t" style="left:1369px;top:111.84px;font-size:12px;color:#f2f2f2;letter-spacing:-0.090px;">Group</span>
<span class="t" style="left:1446px;top:111.84px;font-size:12px;color:#f2f2f2;letter-spacing:-0.281px;">Measure</span>
<span class="t" style="left:1543px;top:111.84px;font-size:12px;color:#f2f2f2;letter-spacing:-0.672px;">Paste</span>
<span class="t" style="left:1640px;top:111.84px;font-size:12px;color:#f2f2f2;letter-spacing:-1.120px;">Base</span>
<span class="t" style="left:670px;top:126.84px;font-size:12px;color:#f2f2f2;letter-spacing:-0.189px;">Properties</span>
<span class="t" style="left:1104px;top:126.84px;font-size:12px;color:#f2f2f2;letter-spacing:-0.189px;">Properties</span>
<span class="t" style="left:254px;top:77.84px;font-size:12px;color:#f2f2f2;letter-spacing:0.219px;">Move</span>
<span class="t" style="left:254px;top:101.84px;font-size:12px;color:#f2f2f2;letter-spacing:-0.005px;">Copy</span>
<span class="t" style="left:254px;top:125.84px;font-size:12px;color:#f2f2f2;letter-spacing:-0.169px;">Stretch</span>
<span class="t" style="left:326px;top:77.84px;font-size:12px;color:#f2f2f2;letter-spacing:-0.272px;">Rotate</span>
<span class="t" style="left:326px;top:101.84px;font-size:12px;color:#f2f2f2;letter-spacing:0.334px;">Mirror</span>
<span class="t" style="left:326px;top:125.84px;font-size:12px;color:#f2f2f2;letter-spacing:-0.758px;">Scale</span>
<span class="t" style="left:395px;top:77.84px;font-size:12px;color:#f2f2f2;letter-spacing:-0.182px;">Trim</span>
<span class="t" style="left:395px;top:101.84px;font-size:12px;color:#f2f2f2;letter-spacing:-0.069px;">Fillet</span>
<span class="t" style="left:395px;top:125.84px;font-size:12px;color:#f2f2f2;letter-spacing:-0.168px;">Array</span>
<span class="t" style="left:610px;top:77.84px;font-size:12px;color:#f2f2f2;letter-spacing:-0.072px;">Linear</span>
<span class="t" style="left:610px;top:101.84px;font-size:12px;color:#f2f2f2;letter-spacing:-0.475px;">Leader</span>
<span class="t" style="left:610px;top:125.84px;font-size:12px;color:#f2f2f2;letter-spacing:-0.422px;">Table</span>
<span class="t" style="left:848px;top:101.84px;font-size:12px;color:#f2f2f2;letter-spacing:-0.064px;">Make Current</span>
<span class="t" style="left:848px;top:125.84px;font-size:12px;color:#f2f2f2;letter-spacing:-0.103px;">Match Layer</span>
<span class="t" style="left:1004px;top:77.84px;font-size:12px;color:#f2f2f2;letter-spacing:-0.406px;">Create</span>
<span class="t" style="left:1004px;top:101.84px;font-size:12px;color:#f2f2f2;letter-spacing:-0.229px;">Edit</span>
<span class="t" style="left:1004px;top:125.84px;font-size:12px;color:#f2f2f2;letter-spacing:0.068px;">Edit Attributes</span>
<span class="t" style="left:809px;top:78.84px;font-size:12px;color:#f2f2f2;letter-spacing:-0.115px;">corte_t</span>
<span class="t" style="left:1208px;top:77.84px;font-size:12px;color:#f2f2f2;letter-spacing:-0.505px;">ByLayer</span>
<span class="t" style="left:1254px;top:101.84px;font-size:12px;color:#f2f2f2;letter-spacing:-0.505px;">ByLayer</span>
<span class="t" style="left:1254px;top:125.84px;font-size:12px;color:#f2f2f2;letter-spacing:-0.505px;">ByLayer</span>
<span class="t" style="left:93px;top:149.84px;font-size:12px;color:#f2f2f2;letter-spacing:-0.339px;">Draw</span>
<span class="t" style="left:325px;top:149.84px;font-size:12px;color:#f2f2f2;letter-spacing:0.531px;">Modify</span>
<span class="t" style="left:533px;top:149.84px;font-size:12px;color:#f2f2f2;letter-spacing:0.290px;">Annotation</span>
<span class="t" style="left:778px;top:149.84px;font-size:12px;color:#f2f2f2;letter-spacing:-0.606px;">Layers</span>
<span class="t" style="left:997px;top:149.84px;font-size:12px;color:#f2f2f2;letter-spacing:-0.086px;">Block</span>
<span class="t" style="left:1192px;top:149.84px;font-size:12px;color:#f2f2f2;letter-spacing:-0.189px;">Properties</span>
<span class="t" style="left:1372px;top:149.84px;font-size:12px;color:#f2f2f2;letter-spacing:-0.272px;">Groups</span>
<span class="t" style="left:1454px;top:149.84px;font-size:12px;color:#f2f2f2;letter-spacing:0.041px;">Utilities</span>
<span class="t" style="left:1549px;top:149.84px;font-size:12px;color:#f2f2f2;letter-spacing:0.078px;">Clipboard</span>
<span class="t" style="left:1626px;top:149.84px;font-size:12px;color:#f2f2f2;letter-spacing:-0.266px;">View</span>
<span class="t" style="left:25px;top:174.84px;font-size:12px;color:#e6e6e6;letter-spacing:-0.336px;">Start</span>
<span class="t" style="left:73px;top:174.84px;font-size:12px;color:#ffffff;letter-spacing:-0.391px;font-weight:bold;">uhouse*</span>
<span class="t" style="left:3.9px;top:203.84px;font-size:12px;color:#e6e6e6;letter-spacing:1.500px;">[−]</span>
<span class="t" style="left:21.1px;top:203.84px;font-size:12px;color:#e6e6e6;letter-spacing:0.521px;">[Top]</span>
<span class="t" style="left:49.2px;top:203.84px;font-size:12px;color:#e6e6e6;letter-spacing:0.018px;">[Wireframe]</span>
</div>
</div>
</body>
</html>
